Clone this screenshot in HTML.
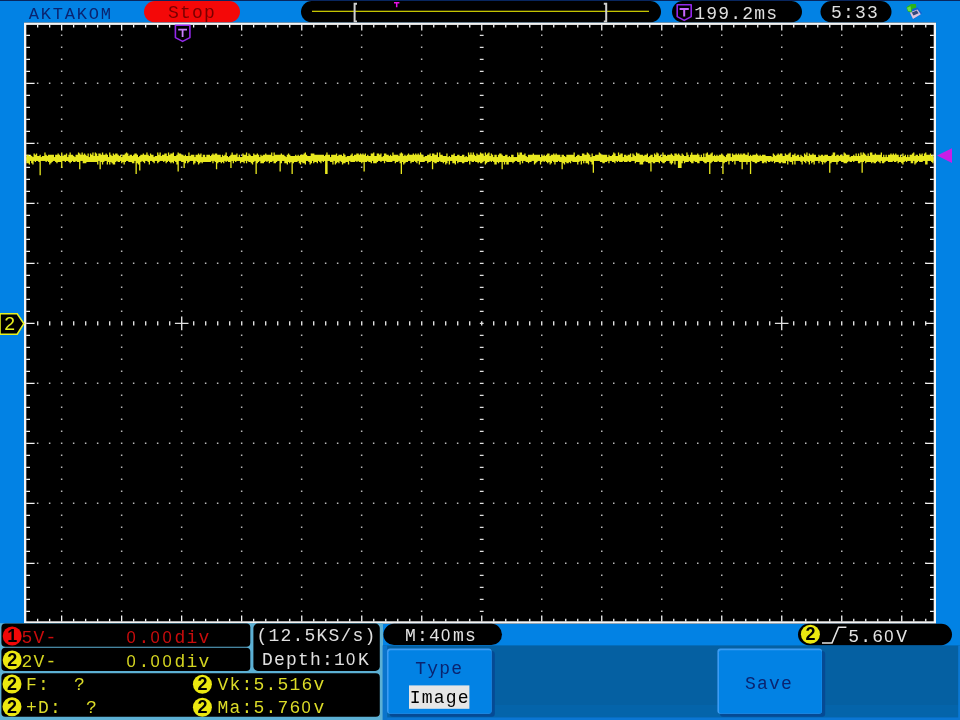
<!DOCTYPE html>
<html lang="en"><head><meta charset="utf-8"><title>AKTAKOM oscilloscope</title>
<style>
html,body{margin:0;padding:0;background:#0282e4;}
body{width:960px;height:720px;overflow:hidden;position:relative;}
svg{position:absolute;left:0;top:0;display:block;filter:blur(0.45px);}
text{font-family:"Liberation Mono","DejaVu Sans Mono",monospace;font-size:18px;letter-spacing:1.2px;white-space:pre;}
.z{font-family:"Liberation Sans","DejaVu Sans",sans-serif;font-size:16.6px;letter-spacing:2.77px;}
.ar{font-family:"Liberation Sans","DejaVu Sans",sans-serif;letter-spacing:0;}
</style></head><body>
<svg width="960" height="720" viewBox="0 0 960 720">
<rect x="0" y="0" width="960" height="720" fill="#0282e4"/>
<rect x="0" y="0" width="960" height="1" fill="#08265e"/>
<rect x="144" y="1" width="96" height="21.5" rx="10.75" fill="#f40808"/>
<text x="168" y="18.2" fill="#7a0000">Stop</text>
<text x="28.8" y="18.8" style="font-size:17px;letter-spacing:1.8px" fill="#0a2470">AKTAKOM</text>
<rect x="301" y="1" width="360" height="21.5" rx="10.75" fill="#000"/>
<rect x="312" y="10.7" width="337" height="1.3" fill="#c4c400"/>
<path d="M357 3.8H354.6V21.4H357" fill="none" stroke="#d0d0d0" stroke-width="2"/>
<path d="M603.8 3.8H606.2V21.4H603.8" fill="none" stroke="#d0d0d0" stroke-width="2"/>
<path d="M394 2.8H399.4M396.7 2.8V7.2" fill="none" stroke="#e810e8" stroke-width="1.5"/>
<rect x="672" y="1" width="130" height="21.5" rx="10.75" fill="#000"/>
<path d="M677.2 4.8H691.2V16.6L684.2 20.4L677.2 16.6Z" fill="#000" stroke="#9428ec" stroke-width="1.6" stroke-linejoin="round"/>
<path d="M679.6 8.9H688.8M684.2 8.9V16.6" fill="none" stroke="#c868ff" stroke-width="2"/>
<text x="694.3" y="18.9" fill="#e0e0e0">199.2ms</text>
<rect x="820.5" y="1" width="71" height="21.5" rx="10.75" fill="#000"/>
<text x="831" y="17.9" fill="#e0e0e0">5:33</text>
<path d="M912.6 8.4L917.6 7.4L922 13.2L913.4 19.6L910 13.4Z" fill="#1460d0"/>
<path d="M909.8 12.6L917.4 9.4L920.8 14.2L913 18.9Z" fill="#dcc4dc"/>
<path d="M911.8 12.6L916.8 10.6L918.6 13.2L913.5 15.6Z" fill="#34487c"/>
<path d="M906.4 7.2L911 4L915.8 4L916.4 7.4L912.2 9L911.4 12.4L907.8 11.6Z" fill="#2cb418"/>
<path d="M907 7.8L910.6 6.2L911.2 11.6L908.2 11Z" fill="#68dc48"/>
<rect x="24" y="22.6" width="912" height="601" fill="#000"/>
<path fill="#b8b8b8" d="M60.9 34.6h1.5v1.5h-1.5zM60.9 46.6h1.5v1.5h-1.5zM60.9 58.6h1.5v1.5h-1.5zM60.9 70.6h1.5v1.5h-1.5zM60.9 82.6h1.5v1.5h-1.5zM60.9 94.6h1.5v1.5h-1.5zM60.9 106.6h1.5v1.5h-1.5zM60.9 118.6h1.5v1.5h-1.5zM60.9 130.6h1.5v1.5h-1.5zM60.9 142.6h1.5v1.5h-1.5zM60.9 154.6h1.5v1.5h-1.5zM60.9 166.6h1.5v1.5h-1.5zM60.9 178.6h1.5v1.5h-1.5zM60.9 190.6h1.5v1.5h-1.5zM60.9 202.6h1.5v1.5h-1.5zM60.9 214.6h1.5v1.5h-1.5zM60.9 226.6h1.5v1.5h-1.5zM60.9 238.6h1.5v1.5h-1.5zM60.9 250.6h1.5v1.5h-1.5zM60.9 262.6h1.5v1.5h-1.5zM60.9 274.6h1.5v1.5h-1.5zM60.9 286.6h1.5v1.5h-1.5zM60.9 298.6h1.5v1.5h-1.5zM60.9 310.6h1.5v1.5h-1.5zM60.9 334.6h1.5v1.5h-1.5zM60.9 346.6h1.5v1.5h-1.5zM60.9 358.6h1.5v1.5h-1.5zM60.9 370.6h1.5v1.5h-1.5zM60.9 382.6h1.5v1.5h-1.5zM60.9 394.6h1.5v1.5h-1.5zM60.9 406.6h1.5v1.5h-1.5zM60.9 418.6h1.5v1.5h-1.5zM60.9 430.6h1.5v1.5h-1.5zM60.9 442.6h1.5v1.5h-1.5zM60.9 454.6h1.5v1.5h-1.5zM60.9 466.6h1.5v1.5h-1.5zM60.9 478.6h1.5v1.5h-1.5zM60.9 490.6h1.5v1.5h-1.5zM60.9 502.6h1.5v1.5h-1.5zM60.9 514.6h1.5v1.5h-1.5zM60.9 526.6h1.5v1.5h-1.5zM60.9 538.6h1.5v1.5h-1.5zM60.9 550.6h1.5v1.5h-1.5zM60.9 562.6h1.5v1.5h-1.5zM60.9 574.6h1.5v1.5h-1.5zM60.9 586.6h1.5v1.5h-1.5zM60.9 598.6h1.5v1.5h-1.5zM60.9 610.6h1.5v1.5h-1.5zM120.9 34.6h1.5v1.5h-1.5zM120.9 46.6h1.5v1.5h-1.5zM120.9 58.6h1.5v1.5h-1.5zM120.9 70.6h1.5v1.5h-1.5zM120.9 82.6h1.5v1.5h-1.5zM120.9 94.6h1.5v1.5h-1.5zM120.9 106.6h1.5v1.5h-1.5zM120.9 118.6h1.5v1.5h-1.5zM120.9 130.6h1.5v1.5h-1.5zM120.9 142.6h1.5v1.5h-1.5zM120.9 154.6h1.5v1.5h-1.5zM120.9 166.6h1.5v1.5h-1.5zM120.9 178.6h1.5v1.5h-1.5zM120.9 190.6h1.5v1.5h-1.5zM120.9 202.6h1.5v1.5h-1.5zM120.9 214.6h1.5v1.5h-1.5zM120.9 226.6h1.5v1.5h-1.5zM120.9 238.6h1.5v1.5h-1.5zM120.9 250.6h1.5v1.5h-1.5zM120.9 262.6h1.5v1.5h-1.5zM120.9 274.6h1.5v1.5h-1.5zM120.9 286.6h1.5v1.5h-1.5zM120.9 298.6h1.5v1.5h-1.5zM120.9 310.6h1.5v1.5h-1.5zM120.9 334.6h1.5v1.5h-1.5zM120.9 346.6h1.5v1.5h-1.5zM120.9 358.6h1.5v1.5h-1.5zM120.9 370.6h1.5v1.5h-1.5zM120.9 382.6h1.5v1.5h-1.5zM120.9 394.6h1.5v1.5h-1.5zM120.9 406.6h1.5v1.5h-1.5zM120.9 418.6h1.5v1.5h-1.5zM120.9 430.6h1.5v1.5h-1.5zM120.9 442.6h1.5v1.5h-1.5zM120.9 454.6h1.5v1.5h-1.5zM120.9 466.6h1.5v1.5h-1.5zM120.9 478.6h1.5v1.5h-1.5zM120.9 490.6h1.5v1.5h-1.5zM120.9 502.6h1.5v1.5h-1.5zM120.9 514.6h1.5v1.5h-1.5zM120.9 526.6h1.5v1.5h-1.5zM120.9 538.6h1.5v1.5h-1.5zM120.9 550.6h1.5v1.5h-1.5zM120.9 562.6h1.5v1.5h-1.5zM120.9 574.6h1.5v1.5h-1.5zM120.9 586.6h1.5v1.5h-1.5zM120.9 598.6h1.5v1.5h-1.5zM120.9 610.6h1.5v1.5h-1.5zM180.9 34.6h1.5v1.5h-1.5zM180.9 46.6h1.5v1.5h-1.5zM180.9 58.6h1.5v1.5h-1.5zM180.9 70.6h1.5v1.5h-1.5zM180.9 82.6h1.5v1.5h-1.5zM180.9 94.6h1.5v1.5h-1.5zM180.9 106.6h1.5v1.5h-1.5zM180.9 118.6h1.5v1.5h-1.5zM180.9 130.6h1.5v1.5h-1.5zM180.9 142.6h1.5v1.5h-1.5zM180.9 154.6h1.5v1.5h-1.5zM180.9 166.6h1.5v1.5h-1.5zM180.9 178.6h1.5v1.5h-1.5zM180.9 190.6h1.5v1.5h-1.5zM180.9 202.6h1.5v1.5h-1.5zM180.9 214.6h1.5v1.5h-1.5zM180.9 226.6h1.5v1.5h-1.5zM180.9 238.6h1.5v1.5h-1.5zM180.9 250.6h1.5v1.5h-1.5zM180.9 262.6h1.5v1.5h-1.5zM180.9 274.6h1.5v1.5h-1.5zM180.9 286.6h1.5v1.5h-1.5zM180.9 298.6h1.5v1.5h-1.5zM180.9 310.6h1.5v1.5h-1.5zM180.9 334.6h1.5v1.5h-1.5zM180.9 346.6h1.5v1.5h-1.5zM180.9 358.6h1.5v1.5h-1.5zM180.9 370.6h1.5v1.5h-1.5zM180.9 382.6h1.5v1.5h-1.5zM180.9 394.6h1.5v1.5h-1.5zM180.9 406.6h1.5v1.5h-1.5zM180.9 418.6h1.5v1.5h-1.5zM180.9 430.6h1.5v1.5h-1.5zM180.9 442.6h1.5v1.5h-1.5zM180.9 454.6h1.5v1.5h-1.5zM180.9 466.6h1.5v1.5h-1.5zM180.9 478.6h1.5v1.5h-1.5zM180.9 490.6h1.5v1.5h-1.5zM180.9 502.6h1.5v1.5h-1.5zM180.9 514.6h1.5v1.5h-1.5zM180.9 526.6h1.5v1.5h-1.5zM180.9 538.6h1.5v1.5h-1.5zM180.9 550.6h1.5v1.5h-1.5zM180.9 562.6h1.5v1.5h-1.5zM180.9 574.6h1.5v1.5h-1.5zM180.9 586.6h1.5v1.5h-1.5zM180.9 598.6h1.5v1.5h-1.5zM180.9 610.6h1.5v1.5h-1.5zM240.9 34.6h1.5v1.5h-1.5zM240.9 46.6h1.5v1.5h-1.5zM240.9 58.6h1.5v1.5h-1.5zM240.9 70.6h1.5v1.5h-1.5zM240.9 82.6h1.5v1.5h-1.5zM240.9 94.6h1.5v1.5h-1.5zM240.9 106.6h1.5v1.5h-1.5zM240.9 118.6h1.5v1.5h-1.5zM240.9 130.6h1.5v1.5h-1.5zM240.9 142.6h1.5v1.5h-1.5zM240.9 154.6h1.5v1.5h-1.5zM240.9 166.6h1.5v1.5h-1.5zM240.9 178.6h1.5v1.5h-1.5zM240.9 190.6h1.5v1.5h-1.5zM240.9 202.6h1.5v1.5h-1.5zM240.9 214.6h1.5v1.5h-1.5zM240.9 226.6h1.5v1.5h-1.5zM240.9 238.6h1.5v1.5h-1.5zM240.9 250.6h1.5v1.5h-1.5zM240.9 262.6h1.5v1.5h-1.5zM240.9 274.6h1.5v1.5h-1.5zM240.9 286.6h1.5v1.5h-1.5zM240.9 298.6h1.5v1.5h-1.5zM240.9 310.6h1.5v1.5h-1.5zM240.9 334.6h1.5v1.5h-1.5zM240.9 346.6h1.5v1.5h-1.5zM240.9 358.6h1.5v1.5h-1.5zM240.9 370.6h1.5v1.5h-1.5zM240.9 382.6h1.5v1.5h-1.5zM240.9 394.6h1.5v1.5h-1.5zM240.9 406.6h1.5v1.5h-1.5zM240.9 418.6h1.5v1.5h-1.5zM240.9 430.6h1.5v1.5h-1.5zM240.9 442.6h1.5v1.5h-1.5zM240.9 454.6h1.5v1.5h-1.5zM240.9 466.6h1.5v1.5h-1.5zM240.9 478.6h1.5v1.5h-1.5zM240.9 490.6h1.5v1.5h-1.5zM240.9 502.6h1.5v1.5h-1.5zM240.9 514.6h1.5v1.5h-1.5zM240.9 526.6h1.5v1.5h-1.5zM240.9 538.6h1.5v1.5h-1.5zM240.9 550.6h1.5v1.5h-1.5zM240.9 562.6h1.5v1.5h-1.5zM240.9 574.6h1.5v1.5h-1.5zM240.9 586.6h1.5v1.5h-1.5zM240.9 598.6h1.5v1.5h-1.5zM240.9 610.6h1.5v1.5h-1.5zM300.9 34.6h1.5v1.5h-1.5zM300.9 46.6h1.5v1.5h-1.5zM300.9 58.6h1.5v1.5h-1.5zM300.9 70.6h1.5v1.5h-1.5zM300.9 82.6h1.5v1.5h-1.5zM300.9 94.6h1.5v1.5h-1.5zM300.9 106.6h1.5v1.5h-1.5zM300.9 118.6h1.5v1.5h-1.5zM300.9 130.6h1.5v1.5h-1.5zM300.9 142.6h1.5v1.5h-1.5zM300.9 154.6h1.5v1.5h-1.5zM300.9 166.6h1.5v1.5h-1.5zM300.9 178.6h1.5v1.5h-1.5zM300.9 190.6h1.5v1.5h-1.5zM300.9 202.6h1.5v1.5h-1.5zM300.9 214.6h1.5v1.5h-1.5zM300.9 226.6h1.5v1.5h-1.5zM300.9 238.6h1.5v1.5h-1.5zM300.9 250.6h1.5v1.5h-1.5zM300.9 262.6h1.5v1.5h-1.5zM300.9 274.6h1.5v1.5h-1.5zM300.9 286.6h1.5v1.5h-1.5zM300.9 298.6h1.5v1.5h-1.5zM300.9 310.6h1.5v1.5h-1.5zM300.9 334.6h1.5v1.5h-1.5zM300.9 346.6h1.5v1.5h-1.5zM300.9 358.6h1.5v1.5h-1.5zM300.9 370.6h1.5v1.5h-1.5zM300.9 382.6h1.5v1.5h-1.5zM300.9 394.6h1.5v1.5h-1.5zM300.9 406.6h1.5v1.5h-1.5zM300.9 418.6h1.5v1.5h-1.5zM300.9 430.6h1.5v1.5h-1.5zM300.9 442.6h1.5v1.5h-1.5zM300.9 454.6h1.5v1.5h-1.5zM300.9 466.6h1.5v1.5h-1.5zM300.9 478.6h1.5v1.5h-1.5zM300.9 490.6h1.5v1.5h-1.5zM300.9 502.6h1.5v1.5h-1.5zM300.9 514.6h1.5v1.5h-1.5zM300.9 526.6h1.5v1.5h-1.5zM300.9 538.6h1.5v1.5h-1.5zM300.9 550.6h1.5v1.5h-1.5zM300.9 562.6h1.5v1.5h-1.5zM300.9 574.6h1.5v1.5h-1.5zM300.9 586.6h1.5v1.5h-1.5zM300.9 598.6h1.5v1.5h-1.5zM300.9 610.6h1.5v1.5h-1.5zM360.9 34.6h1.5v1.5h-1.5zM360.9 46.6h1.5v1.5h-1.5zM360.9 58.6h1.5v1.5h-1.5zM360.9 70.6h1.5v1.5h-1.5zM360.9 82.6h1.5v1.5h-1.5zM360.9 94.6h1.5v1.5h-1.5zM360.9 106.6h1.5v1.5h-1.5zM360.9 118.6h1.5v1.5h-1.5zM360.9 130.6h1.5v1.5h-1.5zM360.9 142.6h1.5v1.5h-1.5zM360.9 154.6h1.5v1.5h-1.5zM360.9 166.6h1.5v1.5h-1.5zM360.9 178.6h1.5v1.5h-1.5zM360.9 190.6h1.5v1.5h-1.5zM360.9 202.6h1.5v1.5h-1.5zM360.9 214.6h1.5v1.5h-1.5zM360.9 226.6h1.5v1.5h-1.5zM360.9 238.6h1.5v1.5h-1.5zM360.9 250.6h1.5v1.5h-1.5zM360.9 262.6h1.5v1.5h-1.5zM360.9 274.6h1.5v1.5h-1.5zM360.9 286.6h1.5v1.5h-1.5zM360.9 298.6h1.5v1.5h-1.5zM360.9 310.6h1.5v1.5h-1.5zM360.9 334.6h1.5v1.5h-1.5zM360.9 346.6h1.5v1.5h-1.5zM360.9 358.6h1.5v1.5h-1.5zM360.9 370.6h1.5v1.5h-1.5zM360.9 382.6h1.5v1.5h-1.5zM360.9 394.6h1.5v1.5h-1.5zM360.9 406.6h1.5v1.5h-1.5zM360.9 418.6h1.5v1.5h-1.5zM360.9 430.6h1.5v1.5h-1.5zM360.9 442.6h1.5v1.5h-1.5zM360.9 454.6h1.5v1.5h-1.5zM360.9 466.6h1.5v1.5h-1.5zM360.9 478.6h1.5v1.5h-1.5zM360.9 490.6h1.5v1.5h-1.5zM360.9 502.6h1.5v1.5h-1.5zM360.9 514.6h1.5v1.5h-1.5zM360.9 526.6h1.5v1.5h-1.5zM360.9 538.6h1.5v1.5h-1.5zM360.9 550.6h1.5v1.5h-1.5zM360.9 562.6h1.5v1.5h-1.5zM360.9 574.6h1.5v1.5h-1.5zM360.9 586.6h1.5v1.5h-1.5zM360.9 598.6h1.5v1.5h-1.5zM360.9 610.6h1.5v1.5h-1.5zM420.9 34.6h1.5v1.5h-1.5zM420.9 46.6h1.5v1.5h-1.5zM420.9 58.6h1.5v1.5h-1.5zM420.9 70.6h1.5v1.5h-1.5zM420.9 82.6h1.5v1.5h-1.5zM420.9 94.6h1.5v1.5h-1.5zM420.9 106.6h1.5v1.5h-1.5zM420.9 118.6h1.5v1.5h-1.5zM420.9 130.6h1.5v1.5h-1.5zM420.9 142.6h1.5v1.5h-1.5zM420.9 154.6h1.5v1.5h-1.5zM420.9 166.6h1.5v1.5h-1.5zM420.9 178.6h1.5v1.5h-1.5zM420.9 190.6h1.5v1.5h-1.5zM420.9 202.6h1.5v1.5h-1.5zM420.9 214.6h1.5v1.5h-1.5zM420.9 226.6h1.5v1.5h-1.5zM420.9 238.6h1.5v1.5h-1.5zM420.9 250.6h1.5v1.5h-1.5zM420.9 262.6h1.5v1.5h-1.5zM420.9 274.6h1.5v1.5h-1.5zM420.9 286.6h1.5v1.5h-1.5zM420.9 298.6h1.5v1.5h-1.5zM420.9 310.6h1.5v1.5h-1.5zM420.9 334.6h1.5v1.5h-1.5zM420.9 346.6h1.5v1.5h-1.5zM420.9 358.6h1.5v1.5h-1.5zM420.9 370.6h1.5v1.5h-1.5zM420.9 382.6h1.5v1.5h-1.5zM420.9 394.6h1.5v1.5h-1.5zM420.9 406.6h1.5v1.5h-1.5zM420.9 418.6h1.5v1.5h-1.5zM420.9 430.6h1.5v1.5h-1.5zM420.9 442.6h1.5v1.5h-1.5zM420.9 454.6h1.5v1.5h-1.5zM420.9 466.6h1.5v1.5h-1.5zM420.9 478.6h1.5v1.5h-1.5zM420.9 490.6h1.5v1.5h-1.5zM420.9 502.6h1.5v1.5h-1.5zM420.9 514.6h1.5v1.5h-1.5zM420.9 526.6h1.5v1.5h-1.5zM420.9 538.6h1.5v1.5h-1.5zM420.9 550.6h1.5v1.5h-1.5zM420.9 562.6h1.5v1.5h-1.5zM420.9 574.6h1.5v1.5h-1.5zM420.9 586.6h1.5v1.5h-1.5zM420.9 598.6h1.5v1.5h-1.5zM420.9 610.6h1.5v1.5h-1.5zM541.0 34.6h1.5v1.5h-1.5zM541.0 46.6h1.5v1.5h-1.5zM541.0 58.6h1.5v1.5h-1.5zM541.0 70.6h1.5v1.5h-1.5zM541.0 82.6h1.5v1.5h-1.5zM541.0 94.6h1.5v1.5h-1.5zM541.0 106.6h1.5v1.5h-1.5zM541.0 118.6h1.5v1.5h-1.5zM541.0 130.6h1.5v1.5h-1.5zM541.0 142.6h1.5v1.5h-1.5zM541.0 154.6h1.5v1.5h-1.5zM541.0 166.6h1.5v1.5h-1.5zM541.0 178.6h1.5v1.5h-1.5zM541.0 190.6h1.5v1.5h-1.5zM541.0 202.6h1.5v1.5h-1.5zM541.0 214.6h1.5v1.5h-1.5zM541.0 226.6h1.5v1.5h-1.5zM541.0 238.6h1.5v1.5h-1.5zM541.0 250.6h1.5v1.5h-1.5zM541.0 262.6h1.5v1.5h-1.5zM541.0 274.6h1.5v1.5h-1.5zM541.0 286.6h1.5v1.5h-1.5zM541.0 298.6h1.5v1.5h-1.5zM541.0 310.6h1.5v1.5h-1.5zM541.0 334.6h1.5v1.5h-1.5zM541.0 346.6h1.5v1.5h-1.5zM541.0 358.6h1.5v1.5h-1.5zM541.0 370.6h1.5v1.5h-1.5zM541.0 382.6h1.5v1.5h-1.5zM541.0 394.6h1.5v1.5h-1.5zM541.0 406.6h1.5v1.5h-1.5zM541.0 418.6h1.5v1.5h-1.5zM541.0 430.6h1.5v1.5h-1.5zM541.0 442.6h1.5v1.5h-1.5zM541.0 454.6h1.5v1.5h-1.5zM541.0 466.6h1.5v1.5h-1.5zM541.0 478.6h1.5v1.5h-1.5zM541.0 490.6h1.5v1.5h-1.5zM541.0 502.6h1.5v1.5h-1.5zM541.0 514.6h1.5v1.5h-1.5zM541.0 526.6h1.5v1.5h-1.5zM541.0 538.6h1.5v1.5h-1.5zM541.0 550.6h1.5v1.5h-1.5zM541.0 562.6h1.5v1.5h-1.5zM541.0 574.6h1.5v1.5h-1.5zM541.0 586.6h1.5v1.5h-1.5zM541.0 598.6h1.5v1.5h-1.5zM541.0 610.6h1.5v1.5h-1.5zM601.0 34.6h1.5v1.5h-1.5zM601.0 46.6h1.5v1.5h-1.5zM601.0 58.6h1.5v1.5h-1.5zM601.0 70.6h1.5v1.5h-1.5zM601.0 82.6h1.5v1.5h-1.5zM601.0 94.6h1.5v1.5h-1.5zM601.0 106.6h1.5v1.5h-1.5zM601.0 118.6h1.5v1.5h-1.5zM601.0 130.6h1.5v1.5h-1.5zM601.0 142.6h1.5v1.5h-1.5zM601.0 154.6h1.5v1.5h-1.5zM601.0 166.6h1.5v1.5h-1.5zM601.0 178.6h1.5v1.5h-1.5zM601.0 190.6h1.5v1.5h-1.5zM601.0 202.6h1.5v1.5h-1.5zM601.0 214.6h1.5v1.5h-1.5zM601.0 226.6h1.5v1.5h-1.5zM601.0 238.6h1.5v1.5h-1.5zM601.0 250.6h1.5v1.5h-1.5zM601.0 262.6h1.5v1.5h-1.5zM601.0 274.6h1.5v1.5h-1.5zM601.0 286.6h1.5v1.5h-1.5zM601.0 298.6h1.5v1.5h-1.5zM601.0 310.6h1.5v1.5h-1.5zM601.0 334.6h1.5v1.5h-1.5zM601.0 346.6h1.5v1.5h-1.5zM601.0 358.6h1.5v1.5h-1.5zM601.0 370.6h1.5v1.5h-1.5zM601.0 382.6h1.5v1.5h-1.5zM601.0 394.6h1.5v1.5h-1.5zM601.0 406.6h1.5v1.5h-1.5zM601.0 418.6h1.5v1.5h-1.5zM601.0 430.6h1.5v1.5h-1.5zM601.0 442.6h1.5v1.5h-1.5zM601.0 454.6h1.5v1.5h-1.5zM601.0 466.6h1.5v1.5h-1.5zM601.0 478.6h1.5v1.5h-1.5zM601.0 490.6h1.5v1.5h-1.5zM601.0 502.6h1.5v1.5h-1.5zM601.0 514.6h1.5v1.5h-1.5zM601.0 526.6h1.5v1.5h-1.5zM601.0 538.6h1.5v1.5h-1.5zM601.0 550.6h1.5v1.5h-1.5zM601.0 562.6h1.5v1.5h-1.5zM601.0 574.6h1.5v1.5h-1.5zM601.0 586.6h1.5v1.5h-1.5zM601.0 598.6h1.5v1.5h-1.5zM601.0 610.6h1.5v1.5h-1.5zM661.0 34.6h1.5v1.5h-1.5zM661.0 46.6h1.5v1.5h-1.5zM661.0 58.6h1.5v1.5h-1.5zM661.0 70.6h1.5v1.5h-1.5zM661.0 82.6h1.5v1.5h-1.5zM661.0 94.6h1.5v1.5h-1.5zM661.0 106.6h1.5v1.5h-1.5zM661.0 118.6h1.5v1.5h-1.5zM661.0 130.6h1.5v1.5h-1.5zM661.0 142.6h1.5v1.5h-1.5zM661.0 154.6h1.5v1.5h-1.5zM661.0 166.6h1.5v1.5h-1.5zM661.0 178.6h1.5v1.5h-1.5zM661.0 190.6h1.5v1.5h-1.5zM661.0 202.6h1.5v1.5h-1.5zM661.0 214.6h1.5v1.5h-1.5zM661.0 226.6h1.5v1.5h-1.5zM661.0 238.6h1.5v1.5h-1.5zM661.0 250.6h1.5v1.5h-1.5zM661.0 262.6h1.5v1.5h-1.5zM661.0 274.6h1.5v1.5h-1.5zM661.0 286.6h1.5v1.5h-1.5zM661.0 298.6h1.5v1.5h-1.5zM661.0 310.6h1.5v1.5h-1.5zM661.0 334.6h1.5v1.5h-1.5zM661.0 346.6h1.5v1.5h-1.5zM661.0 358.6h1.5v1.5h-1.5zM661.0 370.6h1.5v1.5h-1.5zM661.0 382.6h1.5v1.5h-1.5zM661.0 394.6h1.5v1.5h-1.5zM661.0 406.6h1.5v1.5h-1.5zM661.0 418.6h1.5v1.5h-1.5zM661.0 430.6h1.5v1.5h-1.5zM661.0 442.6h1.5v1.5h-1.5zM661.0 454.6h1.5v1.5h-1.5zM661.0 466.6h1.5v1.5h-1.5zM661.0 478.6h1.5v1.5h-1.5zM661.0 490.6h1.5v1.5h-1.5zM661.0 502.6h1.5v1.5h-1.5zM661.0 514.6h1.5v1.5h-1.5zM661.0 526.6h1.5v1.5h-1.5zM661.0 538.6h1.5v1.5h-1.5zM661.0 550.6h1.5v1.5h-1.5zM661.0 562.6h1.5v1.5h-1.5zM661.0 574.6h1.5v1.5h-1.5zM661.0 586.6h1.5v1.5h-1.5zM661.0 598.6h1.5v1.5h-1.5zM661.0 610.6h1.5v1.5h-1.5zM721.0 34.6h1.5v1.5h-1.5zM721.0 46.6h1.5v1.5h-1.5zM721.0 58.6h1.5v1.5h-1.5zM721.0 70.6h1.5v1.5h-1.5zM721.0 82.6h1.5v1.5h-1.5zM721.0 94.6h1.5v1.5h-1.5zM721.0 106.6h1.5v1.5h-1.5zM721.0 118.6h1.5v1.5h-1.5zM721.0 130.6h1.5v1.5h-1.5zM721.0 142.6h1.5v1.5h-1.5zM721.0 154.6h1.5v1.5h-1.5zM721.0 166.6h1.5v1.5h-1.5zM721.0 178.6h1.5v1.5h-1.5zM721.0 190.6h1.5v1.5h-1.5zM721.0 202.6h1.5v1.5h-1.5zM721.0 214.6h1.5v1.5h-1.5zM721.0 226.6h1.5v1.5h-1.5zM721.0 238.6h1.5v1.5h-1.5zM721.0 250.6h1.5v1.5h-1.5zM721.0 262.6h1.5v1.5h-1.5zM721.0 274.6h1.5v1.5h-1.5zM721.0 286.6h1.5v1.5h-1.5zM721.0 298.6h1.5v1.5h-1.5zM721.0 310.6h1.5v1.5h-1.5zM721.0 334.6h1.5v1.5h-1.5zM721.0 346.6h1.5v1.5h-1.5zM721.0 358.6h1.5v1.5h-1.5zM721.0 370.6h1.5v1.5h-1.5zM721.0 382.6h1.5v1.5h-1.5zM721.0 394.6h1.5v1.5h-1.5zM721.0 406.6h1.5v1.5h-1.5zM721.0 418.6h1.5v1.5h-1.5zM721.0 430.6h1.5v1.5h-1.5zM721.0 442.6h1.5v1.5h-1.5zM721.0 454.6h1.5v1.5h-1.5zM721.0 466.6h1.5v1.5h-1.5zM721.0 478.6h1.5v1.5h-1.5zM721.0 490.6h1.5v1.5h-1.5zM721.0 502.6h1.5v1.5h-1.5zM721.0 514.6h1.5v1.5h-1.5zM721.0 526.6h1.5v1.5h-1.5zM721.0 538.6h1.5v1.5h-1.5zM721.0 550.6h1.5v1.5h-1.5zM721.0 562.6h1.5v1.5h-1.5zM721.0 574.6h1.5v1.5h-1.5zM721.0 586.6h1.5v1.5h-1.5zM721.0 598.6h1.5v1.5h-1.5zM721.0 610.6h1.5v1.5h-1.5zM781.0 34.6h1.5v1.5h-1.5zM781.0 46.6h1.5v1.5h-1.5zM781.0 58.6h1.5v1.5h-1.5zM781.0 70.6h1.5v1.5h-1.5zM781.0 82.6h1.5v1.5h-1.5zM781.0 94.6h1.5v1.5h-1.5zM781.0 106.6h1.5v1.5h-1.5zM781.0 118.6h1.5v1.5h-1.5zM781.0 130.6h1.5v1.5h-1.5zM781.0 142.6h1.5v1.5h-1.5zM781.0 154.6h1.5v1.5h-1.5zM781.0 166.6h1.5v1.5h-1.5zM781.0 178.6h1.5v1.5h-1.5zM781.0 190.6h1.5v1.5h-1.5zM781.0 202.6h1.5v1.5h-1.5zM781.0 214.6h1.5v1.5h-1.5zM781.0 226.6h1.5v1.5h-1.5zM781.0 238.6h1.5v1.5h-1.5zM781.0 250.6h1.5v1.5h-1.5zM781.0 262.6h1.5v1.5h-1.5zM781.0 274.6h1.5v1.5h-1.5zM781.0 286.6h1.5v1.5h-1.5zM781.0 298.6h1.5v1.5h-1.5zM781.0 310.6h1.5v1.5h-1.5zM781.0 334.6h1.5v1.5h-1.5zM781.0 346.6h1.5v1.5h-1.5zM781.0 358.6h1.5v1.5h-1.5zM781.0 370.6h1.5v1.5h-1.5zM781.0 382.6h1.5v1.5h-1.5zM781.0 394.6h1.5v1.5h-1.5zM781.0 406.6h1.5v1.5h-1.5zM781.0 418.6h1.5v1.5h-1.5zM781.0 430.6h1.5v1.5h-1.5zM781.0 442.6h1.5v1.5h-1.5zM781.0 454.6h1.5v1.5h-1.5zM781.0 466.6h1.5v1.5h-1.5zM781.0 478.6h1.5v1.5h-1.5zM781.0 490.6h1.5v1.5h-1.5zM781.0 502.6h1.5v1.5h-1.5zM781.0 514.6h1.5v1.5h-1.5zM781.0 526.6h1.5v1.5h-1.5zM781.0 538.6h1.5v1.5h-1.5zM781.0 550.6h1.5v1.5h-1.5zM781.0 562.6h1.5v1.5h-1.5zM781.0 574.6h1.5v1.5h-1.5zM781.0 586.6h1.5v1.5h-1.5zM781.0 598.6h1.5v1.5h-1.5zM781.0 610.6h1.5v1.5h-1.5zM841.0 34.6h1.5v1.5h-1.5zM841.0 46.6h1.5v1.5h-1.5zM841.0 58.6h1.5v1.5h-1.5zM841.0 70.6h1.5v1.5h-1.5zM841.0 82.6h1.5v1.5h-1.5zM841.0 94.6h1.5v1.5h-1.5zM841.0 106.6h1.5v1.5h-1.5zM841.0 118.6h1.5v1.5h-1.5zM841.0 130.6h1.5v1.5h-1.5zM841.0 142.6h1.5v1.5h-1.5zM841.0 154.6h1.5v1.5h-1.5zM841.0 166.6h1.5v1.5h-1.5zM841.0 178.6h1.5v1.5h-1.5zM841.0 190.6h1.5v1.5h-1.5zM841.0 202.6h1.5v1.5h-1.5zM841.0 214.6h1.5v1.5h-1.5zM841.0 226.6h1.5v1.5h-1.5zM841.0 238.6h1.5v1.5h-1.5zM841.0 250.6h1.5v1.5h-1.5zM841.0 262.6h1.5v1.5h-1.5zM841.0 274.6h1.5v1.5h-1.5zM841.0 286.6h1.5v1.5h-1.5zM841.0 298.6h1.5v1.5h-1.5zM841.0 310.6h1.5v1.5h-1.5zM841.0 334.6h1.5v1.5h-1.5zM841.0 346.6h1.5v1.5h-1.5zM841.0 358.6h1.5v1.5h-1.5zM841.0 370.6h1.5v1.5h-1.5zM841.0 382.6h1.5v1.5h-1.5zM841.0 394.6h1.5v1.5h-1.5zM841.0 406.6h1.5v1.5h-1.5zM841.0 418.6h1.5v1.5h-1.5zM841.0 430.6h1.5v1.5h-1.5zM841.0 442.6h1.5v1.5h-1.5zM841.0 454.6h1.5v1.5h-1.5zM841.0 466.6h1.5v1.5h-1.5zM841.0 478.6h1.5v1.5h-1.5zM841.0 490.6h1.5v1.5h-1.5zM841.0 502.6h1.5v1.5h-1.5zM841.0 514.6h1.5v1.5h-1.5zM841.0 526.6h1.5v1.5h-1.5zM841.0 538.6h1.5v1.5h-1.5zM841.0 550.6h1.5v1.5h-1.5zM841.0 562.6h1.5v1.5h-1.5zM841.0 574.6h1.5v1.5h-1.5zM841.0 586.6h1.5v1.5h-1.5zM841.0 598.6h1.5v1.5h-1.5zM841.0 610.6h1.5v1.5h-1.5zM901.0 34.6h1.5v1.5h-1.5zM901.0 46.6h1.5v1.5h-1.5zM901.0 58.6h1.5v1.5h-1.5zM901.0 70.6h1.5v1.5h-1.5zM901.0 82.6h1.5v1.5h-1.5zM901.0 94.6h1.5v1.5h-1.5zM901.0 106.6h1.5v1.5h-1.5zM901.0 118.6h1.5v1.5h-1.5zM901.0 130.6h1.5v1.5h-1.5zM901.0 142.6h1.5v1.5h-1.5zM901.0 154.6h1.5v1.5h-1.5zM901.0 166.6h1.5v1.5h-1.5zM901.0 178.6h1.5v1.5h-1.5zM901.0 190.6h1.5v1.5h-1.5zM901.0 202.6h1.5v1.5h-1.5zM901.0 214.6h1.5v1.5h-1.5zM901.0 226.6h1.5v1.5h-1.5zM901.0 238.6h1.5v1.5h-1.5zM901.0 250.6h1.5v1.5h-1.5zM901.0 262.6h1.5v1.5h-1.5zM901.0 274.6h1.5v1.5h-1.5zM901.0 286.6h1.5v1.5h-1.5zM901.0 298.6h1.5v1.5h-1.5zM901.0 310.6h1.5v1.5h-1.5zM901.0 334.6h1.5v1.5h-1.5zM901.0 346.6h1.5v1.5h-1.5zM901.0 358.6h1.5v1.5h-1.5zM901.0 370.6h1.5v1.5h-1.5zM901.0 382.6h1.5v1.5h-1.5zM901.0 394.6h1.5v1.5h-1.5zM901.0 406.6h1.5v1.5h-1.5zM901.0 418.6h1.5v1.5h-1.5zM901.0 430.6h1.5v1.5h-1.5zM901.0 442.6h1.5v1.5h-1.5zM901.0 454.6h1.5v1.5h-1.5zM901.0 466.6h1.5v1.5h-1.5zM901.0 478.6h1.5v1.5h-1.5zM901.0 490.6h1.5v1.5h-1.5zM901.0 502.6h1.5v1.5h-1.5zM901.0 514.6h1.5v1.5h-1.5zM901.0 526.6h1.5v1.5h-1.5zM901.0 538.6h1.5v1.5h-1.5zM901.0 550.6h1.5v1.5h-1.5zM901.0 562.6h1.5v1.5h-1.5zM901.0 574.6h1.5v1.5h-1.5zM901.0 586.6h1.5v1.5h-1.5zM901.0 598.6h1.5v1.5h-1.5zM901.0 610.6h1.5v1.5h-1.5zM36.9 82.6h1.5v1.5h-1.5zM48.9 82.6h1.5v1.5h-1.5zM72.9 82.6h1.5v1.5h-1.5zM84.9 82.6h1.5v1.5h-1.5zM96.9 82.6h1.5v1.5h-1.5zM108.9 82.6h1.5v1.5h-1.5zM132.9 82.6h1.5v1.5h-1.5zM144.9 82.6h1.5v1.5h-1.5zM156.9 82.6h1.5v1.5h-1.5zM168.9 82.6h1.5v1.5h-1.5zM192.9 82.6h1.5v1.5h-1.5zM204.9 82.6h1.5v1.5h-1.5zM216.9 82.6h1.5v1.5h-1.5zM228.9 82.6h1.5v1.5h-1.5zM252.9 82.6h1.5v1.5h-1.5zM264.9 82.6h1.5v1.5h-1.5zM276.9 82.6h1.5v1.5h-1.5zM288.9 82.6h1.5v1.5h-1.5zM312.9 82.6h1.5v1.5h-1.5zM324.9 82.6h1.5v1.5h-1.5zM336.9 82.6h1.5v1.5h-1.5zM348.9 82.6h1.5v1.5h-1.5zM372.9 82.6h1.5v1.5h-1.5zM384.9 82.6h1.5v1.5h-1.5zM396.9 82.6h1.5v1.5h-1.5zM408.9 82.6h1.5v1.5h-1.5zM432.9 82.6h1.5v1.5h-1.5zM444.9 82.6h1.5v1.5h-1.5zM456.9 82.6h1.5v1.5h-1.5zM468.9 82.6h1.5v1.5h-1.5zM492.9 82.6h1.5v1.5h-1.5zM504.9 82.6h1.5v1.5h-1.5zM517.0 82.6h1.5v1.5h-1.5zM529.0 82.6h1.5v1.5h-1.5zM553.0 82.6h1.5v1.5h-1.5zM565.0 82.6h1.5v1.5h-1.5zM577.0 82.6h1.5v1.5h-1.5zM589.0 82.6h1.5v1.5h-1.5zM613.0 82.6h1.5v1.5h-1.5zM625.0 82.6h1.5v1.5h-1.5zM637.0 82.6h1.5v1.5h-1.5zM649.0 82.6h1.5v1.5h-1.5zM673.0 82.6h1.5v1.5h-1.5zM685.0 82.6h1.5v1.5h-1.5zM697.0 82.6h1.5v1.5h-1.5zM709.0 82.6h1.5v1.5h-1.5zM733.0 82.6h1.5v1.5h-1.5zM745.0 82.6h1.5v1.5h-1.5zM757.0 82.6h1.5v1.5h-1.5zM769.0 82.6h1.5v1.5h-1.5zM793.0 82.6h1.5v1.5h-1.5zM805.0 82.6h1.5v1.5h-1.5zM817.0 82.6h1.5v1.5h-1.5zM829.0 82.6h1.5v1.5h-1.5zM853.0 82.6h1.5v1.5h-1.5zM865.0 82.6h1.5v1.5h-1.5zM877.0 82.6h1.5v1.5h-1.5zM889.0 82.6h1.5v1.5h-1.5zM913.0 82.6h1.5v1.5h-1.5zM925.0 82.6h1.5v1.5h-1.5zM36.9 142.6h1.5v1.5h-1.5zM48.9 142.6h1.5v1.5h-1.5zM72.9 142.6h1.5v1.5h-1.5zM84.9 142.6h1.5v1.5h-1.5zM96.9 142.6h1.5v1.5h-1.5zM108.9 142.6h1.5v1.5h-1.5zM132.9 142.6h1.5v1.5h-1.5zM144.9 142.6h1.5v1.5h-1.5zM156.9 142.6h1.5v1.5h-1.5zM168.9 142.6h1.5v1.5h-1.5zM192.9 142.6h1.5v1.5h-1.5zM204.9 142.6h1.5v1.5h-1.5zM216.9 142.6h1.5v1.5h-1.5zM228.9 142.6h1.5v1.5h-1.5zM252.9 142.6h1.5v1.5h-1.5zM264.9 142.6h1.5v1.5h-1.5zM276.9 142.6h1.5v1.5h-1.5zM288.9 142.6h1.5v1.5h-1.5zM312.9 142.6h1.5v1.5h-1.5zM324.9 142.6h1.5v1.5h-1.5zM336.9 142.6h1.5v1.5h-1.5zM348.9 142.6h1.5v1.5h-1.5zM372.9 142.6h1.5v1.5h-1.5zM384.9 142.6h1.5v1.5h-1.5zM396.9 142.6h1.5v1.5h-1.5zM408.9 142.6h1.5v1.5h-1.5zM432.9 142.6h1.5v1.5h-1.5zM444.9 142.6h1.5v1.5h-1.5zM456.9 142.6h1.5v1.5h-1.5zM468.9 142.6h1.5v1.5h-1.5zM492.9 142.6h1.5v1.5h-1.5zM504.9 142.6h1.5v1.5h-1.5zM517.0 142.6h1.5v1.5h-1.5zM529.0 142.6h1.5v1.5h-1.5zM553.0 142.6h1.5v1.5h-1.5zM565.0 142.6h1.5v1.5h-1.5zM577.0 142.6h1.5v1.5h-1.5zM589.0 142.6h1.5v1.5h-1.5zM613.0 142.6h1.5v1.5h-1.5zM625.0 142.6h1.5v1.5h-1.5zM637.0 142.6h1.5v1.5h-1.5zM649.0 142.6h1.5v1.5h-1.5zM673.0 142.6h1.5v1.5h-1.5zM685.0 142.6h1.5v1.5h-1.5zM697.0 142.6h1.5v1.5h-1.5zM709.0 142.6h1.5v1.5h-1.5zM733.0 142.6h1.5v1.5h-1.5zM745.0 142.6h1.5v1.5h-1.5zM757.0 142.6h1.5v1.5h-1.5zM769.0 142.6h1.5v1.5h-1.5zM793.0 142.6h1.5v1.5h-1.5zM805.0 142.6h1.5v1.5h-1.5zM817.0 142.6h1.5v1.5h-1.5zM829.0 142.6h1.5v1.5h-1.5zM853.0 142.6h1.5v1.5h-1.5zM865.0 142.6h1.5v1.5h-1.5zM877.0 142.6h1.5v1.5h-1.5zM889.0 142.6h1.5v1.5h-1.5zM913.0 142.6h1.5v1.5h-1.5zM925.0 142.6h1.5v1.5h-1.5zM36.9 202.6h1.5v1.5h-1.5zM48.9 202.6h1.5v1.5h-1.5zM72.9 202.6h1.5v1.5h-1.5zM84.9 202.6h1.5v1.5h-1.5zM96.9 202.6h1.5v1.5h-1.5zM108.9 202.6h1.5v1.5h-1.5zM132.9 202.6h1.5v1.5h-1.5zM144.9 202.6h1.5v1.5h-1.5zM156.9 202.6h1.5v1.5h-1.5zM168.9 202.6h1.5v1.5h-1.5zM192.9 202.6h1.5v1.5h-1.5zM204.9 202.6h1.5v1.5h-1.5zM216.9 202.6h1.5v1.5h-1.5zM228.9 202.6h1.5v1.5h-1.5zM252.9 202.6h1.5v1.5h-1.5zM264.9 202.6h1.5v1.5h-1.5zM276.9 202.6h1.5v1.5h-1.5zM288.9 202.6h1.5v1.5h-1.5zM312.9 202.6h1.5v1.5h-1.5zM324.9 202.6h1.5v1.5h-1.5zM336.9 202.6h1.5v1.5h-1.5zM348.9 202.6h1.5v1.5h-1.5zM372.9 202.6h1.5v1.5h-1.5zM384.9 202.6h1.5v1.5h-1.5zM396.9 202.6h1.5v1.5h-1.5zM408.9 202.6h1.5v1.5h-1.5zM432.9 202.6h1.5v1.5h-1.5zM444.9 202.6h1.5v1.5h-1.5zM456.9 202.6h1.5v1.5h-1.5zM468.9 202.6h1.5v1.5h-1.5zM492.9 202.6h1.5v1.5h-1.5zM504.9 202.6h1.5v1.5h-1.5zM517.0 202.6h1.5v1.5h-1.5zM529.0 202.6h1.5v1.5h-1.5zM553.0 202.6h1.5v1.5h-1.5zM565.0 202.6h1.5v1.5h-1.5zM577.0 202.6h1.5v1.5h-1.5zM589.0 202.6h1.5v1.5h-1.5zM613.0 202.6h1.5v1.5h-1.5zM625.0 202.6h1.5v1.5h-1.5zM637.0 202.6h1.5v1.5h-1.5zM649.0 202.6h1.5v1.5h-1.5zM673.0 202.6h1.5v1.5h-1.5zM685.0 202.6h1.5v1.5h-1.5zM697.0 202.6h1.5v1.5h-1.5zM709.0 202.6h1.5v1.5h-1.5zM733.0 202.6h1.5v1.5h-1.5zM745.0 202.6h1.5v1.5h-1.5zM757.0 202.6h1.5v1.5h-1.5zM769.0 202.6h1.5v1.5h-1.5zM793.0 202.6h1.5v1.5h-1.5zM805.0 202.6h1.5v1.5h-1.5zM817.0 202.6h1.5v1.5h-1.5zM829.0 202.6h1.5v1.5h-1.5zM853.0 202.6h1.5v1.5h-1.5zM865.0 202.6h1.5v1.5h-1.5zM877.0 202.6h1.5v1.5h-1.5zM889.0 202.6h1.5v1.5h-1.5zM913.0 202.6h1.5v1.5h-1.5zM925.0 202.6h1.5v1.5h-1.5zM36.9 262.6h1.5v1.5h-1.5zM48.9 262.6h1.5v1.5h-1.5zM72.9 262.6h1.5v1.5h-1.5zM84.9 262.6h1.5v1.5h-1.5zM96.9 262.6h1.5v1.5h-1.5zM108.9 262.6h1.5v1.5h-1.5zM132.9 262.6h1.5v1.5h-1.5zM144.9 262.6h1.5v1.5h-1.5zM156.9 262.6h1.5v1.5h-1.5zM168.9 262.6h1.5v1.5h-1.5zM192.9 262.6h1.5v1.5h-1.5zM204.9 262.6h1.5v1.5h-1.5zM216.9 262.6h1.5v1.5h-1.5zM228.9 262.6h1.5v1.5h-1.5zM252.9 262.6h1.5v1.5h-1.5zM264.9 262.6h1.5v1.5h-1.5zM276.9 262.6h1.5v1.5h-1.5zM288.9 262.6h1.5v1.5h-1.5zM312.9 262.6h1.5v1.5h-1.5zM324.9 262.6h1.5v1.5h-1.5zM336.9 262.6h1.5v1.5h-1.5zM348.9 262.6h1.5v1.5h-1.5zM372.9 262.6h1.5v1.5h-1.5zM384.9 262.6h1.5v1.5h-1.5zM396.9 262.6h1.5v1.5h-1.5zM408.9 262.6h1.5v1.5h-1.5zM432.9 262.6h1.5v1.5h-1.5zM444.9 262.6h1.5v1.5h-1.5zM456.9 262.6h1.5v1.5h-1.5zM468.9 262.6h1.5v1.5h-1.5zM492.9 262.6h1.5v1.5h-1.5zM504.9 262.6h1.5v1.5h-1.5zM517.0 262.6h1.5v1.5h-1.5zM529.0 262.6h1.5v1.5h-1.5zM553.0 262.6h1.5v1.5h-1.5zM565.0 262.6h1.5v1.5h-1.5zM577.0 262.6h1.5v1.5h-1.5zM589.0 262.6h1.5v1.5h-1.5zM613.0 262.6h1.5v1.5h-1.5zM625.0 262.6h1.5v1.5h-1.5zM637.0 262.6h1.5v1.5h-1.5zM649.0 262.6h1.5v1.5h-1.5zM673.0 262.6h1.5v1.5h-1.5zM685.0 262.6h1.5v1.5h-1.5zM697.0 262.6h1.5v1.5h-1.5zM709.0 262.6h1.5v1.5h-1.5zM733.0 262.6h1.5v1.5h-1.5zM745.0 262.6h1.5v1.5h-1.5zM757.0 262.6h1.5v1.5h-1.5zM769.0 262.6h1.5v1.5h-1.5zM793.0 262.6h1.5v1.5h-1.5zM805.0 262.6h1.5v1.5h-1.5zM817.0 262.6h1.5v1.5h-1.5zM829.0 262.6h1.5v1.5h-1.5zM853.0 262.6h1.5v1.5h-1.5zM865.0 262.6h1.5v1.5h-1.5zM877.0 262.6h1.5v1.5h-1.5zM889.0 262.6h1.5v1.5h-1.5zM913.0 262.6h1.5v1.5h-1.5zM925.0 262.6h1.5v1.5h-1.5zM36.9 382.6h1.5v1.5h-1.5zM48.9 382.6h1.5v1.5h-1.5zM72.9 382.6h1.5v1.5h-1.5zM84.9 382.6h1.5v1.5h-1.5zM96.9 382.6h1.5v1.5h-1.5zM108.9 382.6h1.5v1.5h-1.5zM132.9 382.6h1.5v1.5h-1.5zM144.9 382.6h1.5v1.5h-1.5zM156.9 382.6h1.5v1.5h-1.5zM168.9 382.6h1.5v1.5h-1.5zM192.9 382.6h1.5v1.5h-1.5zM204.9 382.6h1.5v1.5h-1.5zM216.9 382.6h1.5v1.5h-1.5zM228.9 382.6h1.5v1.5h-1.5zM252.9 382.6h1.5v1.5h-1.5zM264.9 382.6h1.5v1.5h-1.5zM276.9 382.6h1.5v1.5h-1.5zM288.9 382.6h1.5v1.5h-1.5zM312.9 382.6h1.5v1.5h-1.5zM324.9 382.6h1.5v1.5h-1.5zM336.9 382.6h1.5v1.5h-1.5zM348.9 382.6h1.5v1.5h-1.5zM372.9 382.6h1.5v1.5h-1.5zM384.9 382.6h1.5v1.5h-1.5zM396.9 382.6h1.5v1.5h-1.5zM408.9 382.6h1.5v1.5h-1.5zM432.9 382.6h1.5v1.5h-1.5zM444.9 382.6h1.5v1.5h-1.5zM456.9 382.6h1.5v1.5h-1.5zM468.9 382.6h1.5v1.5h-1.5zM492.9 382.6h1.5v1.5h-1.5zM504.9 382.6h1.5v1.5h-1.5zM517.0 382.6h1.5v1.5h-1.5zM529.0 382.6h1.5v1.5h-1.5zM553.0 382.6h1.5v1.5h-1.5zM565.0 382.6h1.5v1.5h-1.5zM577.0 382.6h1.5v1.5h-1.5zM589.0 382.6h1.5v1.5h-1.5zM613.0 382.6h1.5v1.5h-1.5zM625.0 382.6h1.5v1.5h-1.5zM637.0 382.6h1.5v1.5h-1.5zM649.0 382.6h1.5v1.5h-1.5zM673.0 382.6h1.5v1.5h-1.5zM685.0 382.6h1.5v1.5h-1.5zM697.0 382.6h1.5v1.5h-1.5zM709.0 382.6h1.5v1.5h-1.5zM733.0 382.6h1.5v1.5h-1.5zM745.0 382.6h1.5v1.5h-1.5zM757.0 382.6h1.5v1.5h-1.5zM769.0 382.6h1.5v1.5h-1.5zM793.0 382.6h1.5v1.5h-1.5zM805.0 382.6h1.5v1.5h-1.5zM817.0 382.6h1.5v1.5h-1.5zM829.0 382.6h1.5v1.5h-1.5zM853.0 382.6h1.5v1.5h-1.5zM865.0 382.6h1.5v1.5h-1.5zM877.0 382.6h1.5v1.5h-1.5zM889.0 382.6h1.5v1.5h-1.5zM913.0 382.6h1.5v1.5h-1.5zM925.0 382.6h1.5v1.5h-1.5zM36.9 442.6h1.5v1.5h-1.5zM48.9 442.6h1.5v1.5h-1.5zM72.9 442.6h1.5v1.5h-1.5zM84.9 442.6h1.5v1.5h-1.5zM96.9 442.6h1.5v1.5h-1.5zM108.9 442.6h1.5v1.5h-1.5zM132.9 442.6h1.5v1.5h-1.5zM144.9 442.6h1.5v1.5h-1.5zM156.9 442.6h1.5v1.5h-1.5zM168.9 442.6h1.5v1.5h-1.5zM192.9 442.6h1.5v1.5h-1.5zM204.9 442.6h1.5v1.5h-1.5zM216.9 442.6h1.5v1.5h-1.5zM228.9 442.6h1.5v1.5h-1.5zM252.9 442.6h1.5v1.5h-1.5zM264.9 442.6h1.5v1.5h-1.5zM276.9 442.6h1.5v1.5h-1.5zM288.9 442.6h1.5v1.5h-1.5zM312.9 442.6h1.5v1.5h-1.5zM324.9 442.6h1.5v1.5h-1.5zM336.9 442.6h1.5v1.5h-1.5zM348.9 442.6h1.5v1.5h-1.5zM372.9 442.6h1.5v1.5h-1.5zM384.9 442.6h1.5v1.5h-1.5zM396.9 442.6h1.5v1.5h-1.5zM408.9 442.6h1.5v1.5h-1.5zM432.9 442.6h1.5v1.5h-1.5zM444.9 442.6h1.5v1.5h-1.5zM456.9 442.6h1.5v1.5h-1.5zM468.9 442.6h1.5v1.5h-1.5zM492.9 442.6h1.5v1.5h-1.5zM504.9 442.6h1.5v1.5h-1.5zM517.0 442.6h1.5v1.5h-1.5zM529.0 442.6h1.5v1.5h-1.5zM553.0 442.6h1.5v1.5h-1.5zM565.0 442.6h1.5v1.5h-1.5zM577.0 442.6h1.5v1.5h-1.5zM589.0 442.6h1.5v1.5h-1.5zM613.0 442.6h1.5v1.5h-1.5zM625.0 442.6h1.5v1.5h-1.5zM637.0 442.6h1.5v1.5h-1.5zM649.0 442.6h1.5v1.5h-1.5zM673.0 442.6h1.5v1.5h-1.5zM685.0 442.6h1.5v1.5h-1.5zM697.0 442.6h1.5v1.5h-1.5zM709.0 442.6h1.5v1.5h-1.5zM733.0 442.6h1.5v1.5h-1.5zM745.0 442.6h1.5v1.5h-1.5zM757.0 442.6h1.5v1.5h-1.5zM769.0 442.6h1.5v1.5h-1.5zM793.0 442.6h1.5v1.5h-1.5zM805.0 442.6h1.5v1.5h-1.5zM817.0 442.6h1.5v1.5h-1.5zM829.0 442.6h1.5v1.5h-1.5zM853.0 442.6h1.5v1.5h-1.5zM865.0 442.6h1.5v1.5h-1.5zM877.0 442.6h1.5v1.5h-1.5zM889.0 442.6h1.5v1.5h-1.5zM913.0 442.6h1.5v1.5h-1.5zM925.0 442.6h1.5v1.5h-1.5zM36.9 502.6h1.5v1.5h-1.5zM48.9 502.6h1.5v1.5h-1.5zM72.9 502.6h1.5v1.5h-1.5zM84.9 502.6h1.5v1.5h-1.5zM96.9 502.6h1.5v1.5h-1.5zM108.9 502.6h1.5v1.5h-1.5zM132.9 502.6h1.5v1.5h-1.5zM144.9 502.6h1.5v1.5h-1.5zM156.9 502.6h1.5v1.5h-1.5zM168.9 502.6h1.5v1.5h-1.5zM192.9 502.6h1.5v1.5h-1.5zM204.9 502.6h1.5v1.5h-1.5zM216.9 502.6h1.5v1.5h-1.5zM228.9 502.6h1.5v1.5h-1.5zM252.9 502.6h1.5v1.5h-1.5zM264.9 502.6h1.5v1.5h-1.5zM276.9 502.6h1.5v1.5h-1.5zM288.9 502.6h1.5v1.5h-1.5zM312.9 502.6h1.5v1.5h-1.5zM324.9 502.6h1.5v1.5h-1.5zM336.9 502.6h1.5v1.5h-1.5zM348.9 502.6h1.5v1.5h-1.5zM372.9 502.6h1.5v1.5h-1.5zM384.9 502.6h1.5v1.5h-1.5zM396.9 502.6h1.5v1.5h-1.5zM408.9 502.6h1.5v1.5h-1.5zM432.9 502.6h1.5v1.5h-1.5zM444.9 502.6h1.5v1.5h-1.5zM456.9 502.6h1.5v1.5h-1.5zM468.9 502.6h1.5v1.5h-1.5zM492.9 502.6h1.5v1.5h-1.5zM504.9 502.6h1.5v1.5h-1.5zM517.0 502.6h1.5v1.5h-1.5zM529.0 502.6h1.5v1.5h-1.5zM553.0 502.6h1.5v1.5h-1.5zM565.0 502.6h1.5v1.5h-1.5zM577.0 502.6h1.5v1.5h-1.5zM589.0 502.6h1.5v1.5h-1.5zM613.0 502.6h1.5v1.5h-1.5zM625.0 502.6h1.5v1.5h-1.5zM637.0 502.6h1.5v1.5h-1.5zM649.0 502.6h1.5v1.5h-1.5zM673.0 502.6h1.5v1.5h-1.5zM685.0 502.6h1.5v1.5h-1.5zM697.0 502.6h1.5v1.5h-1.5zM709.0 502.6h1.5v1.5h-1.5zM733.0 502.6h1.5v1.5h-1.5zM745.0 502.6h1.5v1.5h-1.5zM757.0 502.6h1.5v1.5h-1.5zM769.0 502.6h1.5v1.5h-1.5zM793.0 502.6h1.5v1.5h-1.5zM805.0 502.6h1.5v1.5h-1.5zM817.0 502.6h1.5v1.5h-1.5zM829.0 502.6h1.5v1.5h-1.5zM853.0 502.6h1.5v1.5h-1.5zM865.0 502.6h1.5v1.5h-1.5zM877.0 502.6h1.5v1.5h-1.5zM889.0 502.6h1.5v1.5h-1.5zM913.0 502.6h1.5v1.5h-1.5zM925.0 502.6h1.5v1.5h-1.5zM36.9 562.6h1.5v1.5h-1.5zM48.9 562.6h1.5v1.5h-1.5zM72.9 562.6h1.5v1.5h-1.5zM84.9 562.6h1.5v1.5h-1.5zM96.9 562.6h1.5v1.5h-1.5zM108.9 562.6h1.5v1.5h-1.5zM132.9 562.6h1.5v1.5h-1.5zM144.9 562.6h1.5v1.5h-1.5zM156.9 562.6h1.5v1.5h-1.5zM168.9 562.6h1.5v1.5h-1.5zM192.9 562.6h1.5v1.5h-1.5zM204.9 562.6h1.5v1.5h-1.5zM216.9 562.6h1.5v1.5h-1.5zM228.9 562.6h1.5v1.5h-1.5zM252.9 562.6h1.5v1.5h-1.5zM264.9 562.6h1.5v1.5h-1.5zM276.9 562.6h1.5v1.5h-1.5zM288.9 562.6h1.5v1.5h-1.5zM312.9 562.6h1.5v1.5h-1.5zM324.9 562.6h1.5v1.5h-1.5zM336.9 562.6h1.5v1.5h-1.5zM348.9 562.6h1.5v1.5h-1.5zM372.9 562.6h1.5v1.5h-1.5zM384.9 562.6h1.5v1.5h-1.5zM396.9 562.6h1.5v1.5h-1.5zM408.9 562.6h1.5v1.5h-1.5zM432.9 562.6h1.5v1.5h-1.5zM444.9 562.6h1.5v1.5h-1.5zM456.9 562.6h1.5v1.5h-1.5zM468.9 562.6h1.5v1.5h-1.5zM492.9 562.6h1.5v1.5h-1.5zM504.9 562.6h1.5v1.5h-1.5zM517.0 562.6h1.5v1.5h-1.5zM529.0 562.6h1.5v1.5h-1.5zM553.0 562.6h1.5v1.5h-1.5zM565.0 562.6h1.5v1.5h-1.5zM577.0 562.6h1.5v1.5h-1.5zM589.0 562.6h1.5v1.5h-1.5zM613.0 562.6h1.5v1.5h-1.5zM625.0 562.6h1.5v1.5h-1.5zM637.0 562.6h1.5v1.5h-1.5zM649.0 562.6h1.5v1.5h-1.5zM673.0 562.6h1.5v1.5h-1.5zM685.0 562.6h1.5v1.5h-1.5zM697.0 562.6h1.5v1.5h-1.5zM709.0 562.6h1.5v1.5h-1.5zM733.0 562.6h1.5v1.5h-1.5zM745.0 562.6h1.5v1.5h-1.5zM757.0 562.6h1.5v1.5h-1.5zM769.0 562.6h1.5v1.5h-1.5zM793.0 562.6h1.5v1.5h-1.5zM805.0 562.6h1.5v1.5h-1.5zM817.0 562.6h1.5v1.5h-1.5zM829.0 562.6h1.5v1.5h-1.5zM853.0 562.6h1.5v1.5h-1.5zM865.0 562.6h1.5v1.5h-1.5zM877.0 562.6h1.5v1.5h-1.5zM889.0 562.6h1.5v1.5h-1.5zM913.0 562.6h1.5v1.5h-1.5zM925.0 562.6h1.5v1.5h-1.5z"/>
<path fill="#e0e0e0" d="M479.8 34.7h3.8v1.4h-3.8zM479.8 46.7h3.8v1.4h-3.8zM479.8 58.7h3.8v1.4h-3.8zM479.8 70.7h3.8v1.4h-3.8zM479.8 82.7h3.8v1.4h-3.8zM479.8 94.7h3.8v1.4h-3.8zM479.8 106.7h3.8v1.4h-3.8zM479.8 118.7h3.8v1.4h-3.8zM479.8 130.7h3.8v1.4h-3.8zM479.8 142.7h3.8v1.4h-3.8zM479.8 154.7h3.8v1.4h-3.8zM479.8 166.7h3.8v1.4h-3.8zM479.8 178.7h3.8v1.4h-3.8zM479.8 190.7h3.8v1.4h-3.8zM479.8 202.7h3.8v1.4h-3.8zM479.8 214.7h3.8v1.4h-3.8zM479.8 226.7h3.8v1.4h-3.8zM479.8 238.7h3.8v1.4h-3.8zM479.8 250.7h3.8v1.4h-3.8zM479.8 262.7h3.8v1.4h-3.8zM479.8 274.7h3.8v1.4h-3.8zM479.8 286.7h3.8v1.4h-3.8zM479.8 298.7h3.8v1.4h-3.8zM479.8 310.7h3.8v1.4h-3.8zM479.8 322.7h3.8v1.4h-3.8zM479.8 334.7h3.8v1.4h-3.8zM479.8 346.7h3.8v1.4h-3.8zM479.8 358.7h3.8v1.4h-3.8zM479.8 370.7h3.8v1.4h-3.8zM479.8 382.7h3.8v1.4h-3.8zM479.8 394.7h3.8v1.4h-3.8zM479.8 406.7h3.8v1.4h-3.8zM479.8 418.7h3.8v1.4h-3.8zM479.8 430.7h3.8v1.4h-3.8zM479.8 442.7h3.8v1.4h-3.8zM479.8 454.7h3.8v1.4h-3.8zM479.8 466.7h3.8v1.4h-3.8zM479.8 478.7h3.8v1.4h-3.8zM479.8 490.7h3.8v1.4h-3.8zM479.8 502.7h3.8v1.4h-3.8zM479.8 514.7h3.8v1.4h-3.8zM479.8 526.7h3.8v1.4h-3.8zM479.8 538.7h3.8v1.4h-3.8zM479.8 550.7h3.8v1.4h-3.8zM479.8 562.7h3.8v1.4h-3.8zM479.8 574.7h3.8v1.4h-3.8zM479.8 586.7h3.8v1.4h-3.8zM479.8 598.7h3.8v1.4h-3.8zM479.8 610.7h3.8v1.4h-3.8zM37.0 321.3h1.4v4.2h-1.4zM49.0 321.3h1.4v4.2h-1.4zM61.0 321.3h1.4v4.2h-1.4zM73.0 321.3h1.4v4.2h-1.4zM85.0 321.3h1.4v4.2h-1.4zM97.0 321.3h1.4v4.2h-1.4zM109.0 321.3h1.4v4.2h-1.4zM121.0 321.3h1.4v4.2h-1.4zM133.0 321.3h1.4v4.2h-1.4zM145.0 321.3h1.4v4.2h-1.4zM157.0 321.3h1.4v4.2h-1.4zM169.0 321.3h1.4v4.2h-1.4zM181.0 321.3h1.4v4.2h-1.4zM193.0 321.3h1.4v4.2h-1.4zM205.0 321.3h1.4v4.2h-1.4zM217.0 321.3h1.4v4.2h-1.4zM229.0 321.3h1.4v4.2h-1.4zM241.0 321.3h1.4v4.2h-1.4zM253.0 321.3h1.4v4.2h-1.4zM265.0 321.3h1.4v4.2h-1.4zM277.0 321.3h1.4v4.2h-1.4zM289.0 321.3h1.4v4.2h-1.4zM301.0 321.3h1.4v4.2h-1.4zM313.0 321.3h1.4v4.2h-1.4zM325.0 321.3h1.4v4.2h-1.4zM337.0 321.3h1.4v4.2h-1.4zM349.0 321.3h1.4v4.2h-1.4zM361.0 321.3h1.4v4.2h-1.4zM373.0 321.3h1.4v4.2h-1.4zM385.0 321.3h1.4v4.2h-1.4zM397.0 321.3h1.4v4.2h-1.4zM409.0 321.3h1.4v4.2h-1.4zM421.0 321.3h1.4v4.2h-1.4zM433.0 321.3h1.4v4.2h-1.4zM445.0 321.3h1.4v4.2h-1.4zM457.0 321.3h1.4v4.2h-1.4zM469.0 321.3h1.4v4.2h-1.4zM481.0 321.3h1.4v4.2h-1.4zM493.0 321.3h1.4v4.2h-1.4zM505.0 321.3h1.4v4.2h-1.4zM517.0 321.3h1.4v4.2h-1.4zM529.0 321.3h1.4v4.2h-1.4zM541.0 321.3h1.4v4.2h-1.4zM553.0 321.3h1.4v4.2h-1.4zM565.0 321.3h1.4v4.2h-1.4zM577.0 321.3h1.4v4.2h-1.4zM589.0 321.3h1.4v4.2h-1.4zM601.0 321.3h1.4v4.2h-1.4zM613.0 321.3h1.4v4.2h-1.4zM625.0 321.3h1.4v4.2h-1.4zM637.0 321.3h1.4v4.2h-1.4zM649.0 321.3h1.4v4.2h-1.4zM661.0 321.3h1.4v4.2h-1.4zM673.0 321.3h1.4v4.2h-1.4zM685.0 321.3h1.4v4.2h-1.4zM697.0 321.3h1.4v4.2h-1.4zM709.0 321.3h1.4v4.2h-1.4zM721.0 321.3h1.4v4.2h-1.4zM733.0 321.3h1.4v4.2h-1.4zM745.0 321.3h1.4v4.2h-1.4zM757.0 321.3h1.4v4.2h-1.4zM769.0 321.3h1.4v4.2h-1.4zM781.0 321.3h1.4v4.2h-1.4zM793.0 321.3h1.4v4.2h-1.4zM805.0 321.3h1.4v4.2h-1.4zM817.0 321.3h1.4v4.2h-1.4zM829.0 321.3h1.4v4.2h-1.4zM841.0 321.3h1.4v4.2h-1.4zM853.0 321.3h1.4v4.2h-1.4zM865.0 321.3h1.4v4.2h-1.4zM877.0 321.3h1.4v4.2h-1.4zM889.0 321.3h1.4v4.2h-1.4zM901.0 321.3h1.4v4.2h-1.4zM913.0 321.3h1.4v4.2h-1.4zM925.0 321.3h1.4v4.2h-1.4zM174.9 322.7h13.6v1.4h-13.6zM181.0 316.6h1.4v13.6h-1.4zM774.9 322.7h13.6v1.4h-13.6zM781.0 316.6h1.4v13.6h-1.4z"/>
<path fill="#f4f4f4" d="M37.0 24.8h1.3v2.6h-1.3zM37.0 618.8h1.3v2.6h-1.3zM49.0 24.8h1.3v2.6h-1.3zM49.0 618.8h1.3v2.6h-1.3zM61.0 24.8h1.3v5.8h-1.3zM61.0 615.6h1.3v5.8h-1.3zM73.0 24.8h1.3v2.6h-1.3zM73.0 618.8h1.3v2.6h-1.3zM85.0 24.8h1.3v2.6h-1.3zM85.0 618.8h1.3v2.6h-1.3zM97.0 24.8h1.3v2.6h-1.3zM97.0 618.8h1.3v2.6h-1.3zM109.0 24.8h1.3v2.6h-1.3zM109.0 618.8h1.3v2.6h-1.3zM121.0 24.8h1.3v5.8h-1.3zM121.0 615.6h1.3v5.8h-1.3zM133.0 24.8h1.3v2.6h-1.3zM133.0 618.8h1.3v2.6h-1.3zM145.0 24.8h1.3v2.6h-1.3zM145.0 618.8h1.3v2.6h-1.3zM157.0 24.8h1.3v2.6h-1.3zM157.0 618.8h1.3v2.6h-1.3zM169.0 24.8h1.3v2.6h-1.3zM169.0 618.8h1.3v2.6h-1.3zM181.0 24.8h1.3v5.8h-1.3zM181.0 615.6h1.3v5.8h-1.3zM193.0 24.8h1.3v2.6h-1.3zM193.0 618.8h1.3v2.6h-1.3zM205.0 24.8h1.3v2.6h-1.3zM205.0 618.8h1.3v2.6h-1.3zM217.0 24.8h1.3v2.6h-1.3zM217.0 618.8h1.3v2.6h-1.3zM229.0 24.8h1.3v2.6h-1.3zM229.0 618.8h1.3v2.6h-1.3zM241.0 24.8h1.3v5.8h-1.3zM241.0 615.6h1.3v5.8h-1.3zM253.0 24.8h1.3v2.6h-1.3zM253.0 618.8h1.3v2.6h-1.3zM265.1 24.8h1.3v2.6h-1.3zM265.1 618.8h1.3v2.6h-1.3zM277.1 24.8h1.3v2.6h-1.3zM277.1 618.8h1.3v2.6h-1.3zM289.1 24.8h1.3v2.6h-1.3zM289.1 618.8h1.3v2.6h-1.3zM301.1 24.8h1.3v5.8h-1.3zM301.1 615.6h1.3v5.8h-1.3zM313.1 24.8h1.3v2.6h-1.3zM313.1 618.8h1.3v2.6h-1.3zM325.1 24.8h1.3v2.6h-1.3zM325.1 618.8h1.3v2.6h-1.3zM337.1 24.8h1.3v2.6h-1.3zM337.1 618.8h1.3v2.6h-1.3zM349.1 24.8h1.3v2.6h-1.3zM349.1 618.8h1.3v2.6h-1.3zM361.1 24.8h1.3v5.8h-1.3zM361.1 615.6h1.3v5.8h-1.3zM373.1 24.8h1.3v2.6h-1.3zM373.1 618.8h1.3v2.6h-1.3zM385.1 24.8h1.3v2.6h-1.3zM385.1 618.8h1.3v2.6h-1.3zM397.1 24.8h1.3v2.6h-1.3zM397.1 618.8h1.3v2.6h-1.3zM409.1 24.8h1.3v2.6h-1.3zM409.1 618.8h1.3v2.6h-1.3zM421.1 24.8h1.3v5.8h-1.3zM421.1 615.6h1.3v5.8h-1.3zM433.1 24.8h1.3v2.6h-1.3zM433.1 618.8h1.3v2.6h-1.3zM445.1 24.8h1.3v2.6h-1.3zM445.1 618.8h1.3v2.6h-1.3zM457.1 24.8h1.3v2.6h-1.3zM457.1 618.8h1.3v2.6h-1.3zM469.1 24.8h1.3v2.6h-1.3zM469.1 618.8h1.3v2.6h-1.3zM481.1 24.8h1.3v5.8h-1.3zM481.1 615.6h1.3v5.8h-1.3zM493.1 24.8h1.3v2.6h-1.3zM493.1 618.8h1.3v2.6h-1.3zM505.1 24.8h1.3v2.6h-1.3zM505.1 618.8h1.3v2.6h-1.3zM517.1 24.8h1.3v2.6h-1.3zM517.1 618.8h1.3v2.6h-1.3zM529.1 24.8h1.3v2.6h-1.3zM529.1 618.8h1.3v2.6h-1.3zM541.1 24.8h1.3v5.8h-1.3zM541.1 615.6h1.3v5.8h-1.3zM553.1 24.8h1.3v2.6h-1.3zM553.1 618.8h1.3v2.6h-1.3zM565.1 24.8h1.3v2.6h-1.3zM565.1 618.8h1.3v2.6h-1.3zM577.1 24.8h1.3v2.6h-1.3zM577.1 618.8h1.3v2.6h-1.3zM589.1 24.8h1.3v2.6h-1.3zM589.1 618.8h1.3v2.6h-1.3zM601.1 24.8h1.3v5.8h-1.3zM601.1 615.6h1.3v5.8h-1.3zM613.1 24.8h1.3v2.6h-1.3zM613.1 618.8h1.3v2.6h-1.3zM625.1 24.8h1.3v2.6h-1.3zM625.1 618.8h1.3v2.6h-1.3zM637.1 24.8h1.3v2.6h-1.3zM637.1 618.8h1.3v2.6h-1.3zM649.1 24.8h1.3v2.6h-1.3zM649.1 618.8h1.3v2.6h-1.3zM661.1 24.8h1.3v5.8h-1.3zM661.1 615.6h1.3v5.8h-1.3zM673.1 24.8h1.3v2.6h-1.3zM673.1 618.8h1.3v2.6h-1.3zM685.1 24.8h1.3v2.6h-1.3zM685.1 618.8h1.3v2.6h-1.3zM697.1 24.8h1.3v2.6h-1.3zM697.1 618.8h1.3v2.6h-1.3zM709.1 24.8h1.3v2.6h-1.3zM709.1 618.8h1.3v2.6h-1.3zM721.1 24.8h1.3v5.8h-1.3zM721.1 615.6h1.3v5.8h-1.3zM733.1 24.8h1.3v2.6h-1.3zM733.1 618.8h1.3v2.6h-1.3zM745.1 24.8h1.3v2.6h-1.3zM745.1 618.8h1.3v2.6h-1.3zM757.1 24.8h1.3v2.6h-1.3zM757.1 618.8h1.3v2.6h-1.3zM769.1 24.8h1.3v2.6h-1.3zM769.1 618.8h1.3v2.6h-1.3zM781.1 24.8h1.3v5.8h-1.3zM781.1 615.6h1.3v5.8h-1.3zM793.1 24.8h1.3v2.6h-1.3zM793.1 618.8h1.3v2.6h-1.3zM805.1 24.8h1.3v2.6h-1.3zM805.1 618.8h1.3v2.6h-1.3zM817.1 24.8h1.3v2.6h-1.3zM817.1 618.8h1.3v2.6h-1.3zM829.1 24.8h1.3v2.6h-1.3zM829.1 618.8h1.3v2.6h-1.3zM841.1 24.8h1.3v5.8h-1.3zM841.1 615.6h1.3v5.8h-1.3zM853.1 24.8h1.3v2.6h-1.3zM853.1 618.8h1.3v2.6h-1.3zM865.1 24.8h1.3v2.6h-1.3zM865.1 618.8h1.3v2.6h-1.3zM877.1 24.8h1.3v2.6h-1.3zM877.1 618.8h1.3v2.6h-1.3zM889.1 24.8h1.3v2.6h-1.3zM889.1 618.8h1.3v2.6h-1.3zM901.1 24.8h1.3v5.8h-1.3zM901.1 615.6h1.3v5.8h-1.3zM913.1 24.8h1.3v2.6h-1.3zM913.1 618.8h1.3v2.6h-1.3zM925.1 24.8h1.3v2.6h-1.3zM925.1 618.8h1.3v2.6h-1.3zM26.2 34.7h3.8v1.3h-3.8zM930.0 34.7h3.8v1.3h-3.8zM26.2 46.7h3.8v1.3h-3.8zM930.0 46.7h3.8v1.3h-3.8zM26.2 58.7h3.8v1.3h-3.8zM930.0 58.7h3.8v1.3h-3.8zM26.2 70.7h3.8v1.3h-3.8zM930.0 70.7h3.8v1.3h-3.8zM26.2 82.7h8.4v1.3h-8.4zM925.4 82.7h8.4v1.3h-8.4zM26.2 94.7h3.8v1.3h-3.8zM930.0 94.7h3.8v1.3h-3.8zM26.2 106.7h3.8v1.3h-3.8zM930.0 106.7h3.8v1.3h-3.8zM26.2 118.7h3.8v1.3h-3.8zM930.0 118.7h3.8v1.3h-3.8zM26.2 130.7h3.8v1.3h-3.8zM930.0 130.7h3.8v1.3h-3.8zM26.2 142.7h8.4v1.3h-8.4zM925.4 142.7h8.4v1.3h-8.4zM26.2 154.7h3.8v1.3h-3.8zM930.0 154.7h3.8v1.3h-3.8zM26.2 166.7h3.8v1.3h-3.8zM930.0 166.7h3.8v1.3h-3.8zM26.2 178.7h3.8v1.3h-3.8zM930.0 178.7h3.8v1.3h-3.8zM26.2 190.7h3.8v1.3h-3.8zM930.0 190.7h3.8v1.3h-3.8zM26.2 202.7h8.4v1.3h-8.4zM925.4 202.7h8.4v1.3h-8.4zM26.2 214.7h3.8v1.3h-3.8zM930.0 214.7h3.8v1.3h-3.8zM26.2 226.7h3.8v1.3h-3.8zM930.0 226.7h3.8v1.3h-3.8zM26.2 238.7h3.8v1.3h-3.8zM930.0 238.7h3.8v1.3h-3.8zM26.2 250.7h3.8v1.3h-3.8zM930.0 250.7h3.8v1.3h-3.8zM26.2 262.8h8.4v1.3h-8.4zM925.4 262.8h8.4v1.3h-8.4zM26.2 274.8h3.8v1.3h-3.8zM930.0 274.8h3.8v1.3h-3.8zM26.2 286.8h3.8v1.3h-3.8zM930.0 286.8h3.8v1.3h-3.8zM26.2 298.8h3.8v1.3h-3.8zM930.0 298.8h3.8v1.3h-3.8zM26.2 310.8h3.8v1.3h-3.8zM930.0 310.8h3.8v1.3h-3.8zM26.2 322.8h8.4v1.3h-8.4zM925.4 322.8h8.4v1.3h-8.4zM26.2 334.8h3.8v1.3h-3.8zM930.0 334.8h3.8v1.3h-3.8zM26.2 346.8h3.8v1.3h-3.8zM930.0 346.8h3.8v1.3h-3.8zM26.2 358.8h3.8v1.3h-3.8zM930.0 358.8h3.8v1.3h-3.8zM26.2 370.8h3.8v1.3h-3.8zM930.0 370.8h3.8v1.3h-3.8zM26.2 382.8h8.4v1.3h-8.4zM925.4 382.8h8.4v1.3h-8.4zM26.2 394.8h3.8v1.3h-3.8zM930.0 394.8h3.8v1.3h-3.8zM26.2 406.8h3.8v1.3h-3.8zM930.0 406.8h3.8v1.3h-3.8zM26.2 418.8h3.8v1.3h-3.8zM930.0 418.8h3.8v1.3h-3.8zM26.2 430.8h3.8v1.3h-3.8zM930.0 430.8h3.8v1.3h-3.8zM26.2 442.8h8.4v1.3h-8.4zM925.4 442.8h8.4v1.3h-8.4zM26.2 454.8h3.8v1.3h-3.8zM930.0 454.8h3.8v1.3h-3.8zM26.2 466.8h3.8v1.3h-3.8zM930.0 466.8h3.8v1.3h-3.8zM26.2 478.8h3.8v1.3h-3.8zM930.0 478.8h3.8v1.3h-3.8zM26.2 490.8h3.8v1.3h-3.8zM930.0 490.8h3.8v1.3h-3.8zM26.2 502.8h8.4v1.3h-8.4zM925.4 502.8h8.4v1.3h-8.4zM26.2 514.8h3.8v1.3h-3.8zM930.0 514.8h3.8v1.3h-3.8zM26.2 526.8h3.8v1.3h-3.8zM930.0 526.8h3.8v1.3h-3.8zM26.2 538.8h3.8v1.3h-3.8zM930.0 538.8h3.8v1.3h-3.8zM26.2 550.8h3.8v1.3h-3.8zM930.0 550.8h3.8v1.3h-3.8zM26.2 562.8h8.4v1.3h-8.4zM925.4 562.8h8.4v1.3h-8.4zM26.2 574.8h3.8v1.3h-3.8zM930.0 574.8h3.8v1.3h-3.8zM26.2 586.8h3.8v1.3h-3.8zM930.0 586.8h3.8v1.3h-3.8zM26.2 598.8h3.8v1.3h-3.8zM930.0 598.8h3.8v1.3h-3.8zM26.2 610.8h3.8v1.3h-3.8zM930.0 610.8h3.8v1.3h-3.8z"/>
<path fill="#e8e820" d="M26.3 154.8h1.3v8.4h-1.3zM27.5 154.8h1.3v8.4h-1.3zM28.7 156.0h1.3v8.4h-1.3zM29.9 154.8h1.3v6.0h-1.3zM31.1 156.0h1.3v7.2h-1.3zM32.3 157.2h1.3v7.2h-1.3zM33.5 153.6h1.3v7.2h-1.3zM34.7 154.8h1.3v7.2h-1.3zM35.9 153.6h1.3v7.2h-1.3zM37.1 156.0h1.3v4.8h-1.3zM38.3 156.0h1.3v6.0h-1.3zM39.5 154.8h1.3v20.4h-1.3zM40.7 157.2h1.3v3.6h-1.3zM41.9 156.0h1.3v4.8h-1.3zM43.1 156.0h1.3v4.8h-1.3zM44.3 152.4h1.3v8.4h-1.3zM45.5 154.8h1.3v7.2h-1.3zM46.7 156.0h1.3v4.8h-1.3zM47.9 154.8h1.3v7.2h-1.3zM49.1 154.8h1.3v9.6h-1.3zM50.3 154.8h1.3v8.4h-1.3zM51.5 154.8h1.3v7.2h-1.3zM52.7 154.8h1.3v6.0h-1.3zM53.9 157.2h1.3v3.6h-1.3zM55.1 154.8h1.3v7.2h-1.3zM56.3 154.8h1.3v8.4h-1.3zM57.5 153.6h1.3v8.4h-1.3zM58.7 154.8h1.3v7.2h-1.3zM59.9 156.0h1.3v6.0h-1.3zM61.1 152.4h1.3v15.6h-1.3zM62.3 156.0h1.3v4.8h-1.3zM63.5 154.8h1.3v6.0h-1.3zM64.7 154.8h1.3v7.2h-1.3zM65.9 153.6h1.3v7.2h-1.3zM67.1 157.2h1.3v3.6h-1.3zM68.3 154.8h1.3v7.2h-1.3zM69.5 152.4h1.3v10.8h-1.3zM70.7 154.8h1.3v7.2h-1.3zM71.9 154.8h1.3v6.0h-1.3zM73.1 156.0h1.3v6.0h-1.3zM74.3 157.2h1.3v4.8h-1.3zM75.5 154.8h1.3v6.0h-1.3zM76.7 154.8h1.3v7.2h-1.3zM77.9 152.4h1.3v9.6h-1.3zM79.1 153.6h1.3v15.6h-1.3zM80.3 154.8h1.3v6.0h-1.3zM81.5 152.4h1.3v8.4h-1.3zM82.7 154.8h1.3v8.4h-1.3zM83.9 153.6h1.3v9.6h-1.3zM85.1 154.8h1.3v8.4h-1.3zM86.3 156.0h1.3v6.0h-1.3zM87.5 153.6h1.3v8.4h-1.3zM88.7 157.2h1.3v4.8h-1.3zM89.9 153.6h1.3v8.4h-1.3zM91.1 154.8h1.3v7.2h-1.3zM92.3 152.4h1.3v9.6h-1.3zM93.5 156.0h1.3v6.0h-1.3zM94.7 152.4h1.3v9.6h-1.3zM95.9 153.6h1.3v8.4h-1.3zM97.1 156.0h1.3v8.4h-1.3zM98.3 153.6h1.3v7.2h-1.3zM99.5 153.6h1.3v15.6h-1.3zM100.7 154.8h1.3v7.2h-1.3zM101.9 152.4h1.3v12.0h-1.3zM103.1 154.8h1.3v7.2h-1.3zM104.3 154.8h1.3v6.0h-1.3zM105.5 153.6h1.3v7.2h-1.3zM106.7 154.8h1.3v9.6h-1.3zM107.9 157.2h1.3v4.8h-1.3zM109.1 152.4h1.3v12.0h-1.3zM110.3 154.8h1.3v7.2h-1.3zM111.5 156.0h1.3v7.2h-1.3zM112.7 153.6h1.3v10.8h-1.3zM113.9 154.8h1.3v9.6h-1.3zM115.1 153.6h1.3v8.4h-1.3zM116.3 153.6h1.3v7.2h-1.3zM117.5 154.8h1.3v7.2h-1.3zM118.7 156.0h1.3v6.0h-1.3zM119.9 154.8h1.3v6.0h-1.3zM121.1 157.2h1.3v6.0h-1.3zM122.3 154.8h1.3v7.2h-1.3zM123.5 154.8h1.3v9.6h-1.3zM124.7 153.6h1.3v8.4h-1.3zM125.9 152.4h1.3v8.4h-1.3zM127.1 153.6h1.3v7.2h-1.3zM128.3 156.0h1.3v6.0h-1.3zM129.5 154.8h1.3v7.2h-1.3zM130.7 154.8h1.3v7.2h-1.3zM131.9 156.0h1.3v7.2h-1.3zM133.1 154.8h1.3v8.4h-1.3zM134.3 153.6h1.3v7.2h-1.3zM135.5 153.6h1.3v20.4h-1.3zM136.7 154.8h1.3v8.4h-1.3zM137.9 157.2h1.3v7.2h-1.3zM139.1 156.0h1.3v14.4h-1.3zM140.3 154.8h1.3v7.2h-1.3zM141.5 154.8h1.3v6.0h-1.3zM142.7 153.6h1.3v8.4h-1.3zM143.9 154.8h1.3v8.4h-1.3zM145.1 154.8h1.3v6.0h-1.3zM146.3 152.4h1.3v8.4h-1.3zM147.5 154.8h1.3v7.2h-1.3zM148.7 156.0h1.3v8.4h-1.3zM149.9 153.6h1.3v7.2h-1.3zM151.1 154.8h1.3v6.0h-1.3zM152.3 154.8h1.3v7.2h-1.3zM153.5 157.2h1.3v6.0h-1.3zM154.7 156.0h1.3v4.8h-1.3zM155.9 156.0h1.3v4.8h-1.3zM157.1 152.4h1.3v10.8h-1.3zM158.3 154.8h1.3v7.2h-1.3zM159.5 152.4h1.3v8.4h-1.3zM160.7 156.0h1.3v4.8h-1.3zM161.9 154.8h1.3v6.0h-1.3zM163.1 154.8h1.3v7.2h-1.3zM164.3 153.6h1.3v7.2h-1.3zM165.5 153.6h1.3v9.6h-1.3zM166.7 156.0h1.3v6.0h-1.3zM167.9 152.4h1.3v8.4h-1.3zM169.1 154.8h1.3v7.2h-1.3zM170.3 153.6h1.3v9.6h-1.3zM171.5 153.6h1.3v8.4h-1.3zM172.7 152.4h1.3v10.8h-1.3zM173.9 156.0h1.3v4.8h-1.3zM175.1 156.0h1.3v6.0h-1.3zM176.3 154.8h1.3v9.6h-1.3zM177.5 152.4h1.3v19.2h-1.3zM178.7 153.6h1.3v7.2h-1.3zM179.9 153.6h1.3v7.2h-1.3zM181.1 154.8h1.3v7.2h-1.3zM182.3 154.8h1.3v7.2h-1.3zM183.5 156.0h1.3v12.0h-1.3zM184.7 154.8h1.3v8.4h-1.3zM185.9 156.0h1.3v4.8h-1.3zM187.1 156.0h1.3v7.2h-1.3zM188.3 152.4h1.3v9.6h-1.3zM189.5 156.0h1.3v4.8h-1.3zM190.7 154.8h1.3v6.0h-1.3zM191.9 154.8h1.3v6.0h-1.3zM193.1 154.8h1.3v9.6h-1.3zM194.3 157.2h1.3v6.0h-1.3zM195.5 154.8h1.3v6.0h-1.3zM196.7 154.8h1.3v7.2h-1.3zM197.9 153.6h1.3v10.8h-1.3zM199.1 154.8h1.3v8.4h-1.3zM200.3 153.6h1.3v8.4h-1.3zM201.5 157.2h1.3v6.0h-1.3zM202.7 154.8h1.3v7.2h-1.3zM203.9 154.8h1.3v7.2h-1.3zM205.1 157.2h1.3v4.8h-1.3zM206.3 154.8h1.3v7.2h-1.3zM207.5 154.8h1.3v7.2h-1.3zM208.7 154.8h1.3v7.2h-1.3zM209.9 156.0h1.3v6.0h-1.3zM211.1 154.8h1.3v6.0h-1.3zM212.3 153.6h1.3v9.6h-1.3zM213.5 154.8h1.3v6.0h-1.3zM214.7 153.6h1.3v8.4h-1.3zM215.9 153.6h1.3v15.6h-1.3zM217.1 154.8h1.3v8.4h-1.3zM218.3 154.8h1.3v7.2h-1.3zM219.5 154.8h1.3v7.2h-1.3zM220.7 157.2h1.3v6.0h-1.3zM221.9 154.8h1.3v7.2h-1.3zM223.1 156.0h1.3v7.2h-1.3zM224.3 154.8h1.3v6.0h-1.3zM225.5 152.4h1.3v9.6h-1.3zM226.7 156.0h1.3v4.8h-1.3zM227.9 157.2h1.3v4.8h-1.3zM229.1 156.0h1.3v6.0h-1.3zM230.3 154.8h1.3v13.2h-1.3zM231.5 152.4h1.3v8.4h-1.3zM232.7 154.8h1.3v8.4h-1.3zM233.9 154.8h1.3v6.0h-1.3zM235.1 154.8h1.3v7.2h-1.3zM236.3 153.6h1.3v7.2h-1.3zM237.5 157.2h1.3v3.6h-1.3zM238.7 154.8h1.3v6.0h-1.3zM239.9 157.2h1.3v6.0h-1.3zM241.1 157.2h1.3v4.8h-1.3zM242.3 153.6h1.3v8.4h-1.3zM243.5 154.8h1.3v8.4h-1.3zM244.7 154.8h1.3v6.0h-1.3zM245.9 152.4h1.3v10.8h-1.3zM247.1 156.0h1.3v4.8h-1.3zM248.3 153.6h1.3v8.4h-1.3zM249.5 154.8h1.3v7.2h-1.3zM250.7 156.0h1.3v7.2h-1.3zM251.9 156.0h1.3v8.4h-1.3zM253.1 153.6h1.3v8.4h-1.3zM254.3 154.8h1.3v6.0h-1.3zM255.5 154.8h1.3v19.2h-1.3zM256.7 153.6h1.3v9.6h-1.3zM257.9 154.8h1.3v7.2h-1.3zM259.1 157.2h1.3v3.6h-1.3zM260.3 154.8h1.3v8.4h-1.3zM261.5 156.0h1.3v7.2h-1.3zM262.7 154.8h1.3v8.4h-1.3zM263.9 154.8h1.3v7.2h-1.3zM265.1 153.6h1.3v7.2h-1.3zM266.3 154.8h1.3v7.2h-1.3zM267.5 154.8h1.3v6.0h-1.3zM268.7 154.8h1.3v8.4h-1.3zM269.9 154.8h1.3v7.2h-1.3zM271.1 152.4h1.3v9.6h-1.3zM272.3 156.0h1.3v4.8h-1.3zM273.5 152.4h1.3v10.8h-1.3zM274.7 154.8h1.3v8.4h-1.3zM275.9 154.8h1.3v7.2h-1.3zM277.1 154.8h1.3v6.0h-1.3zM278.3 154.8h1.3v6.0h-1.3zM279.5 154.8h1.3v16.8h-1.3zM280.7 153.6h1.3v9.6h-1.3zM281.9 154.8h1.3v6.0h-1.3zM283.1 154.8h1.3v6.0h-1.3zM284.3 156.0h1.3v7.2h-1.3zM285.5 157.2h1.3v6.0h-1.3zM286.7 154.8h1.3v9.6h-1.3zM287.9 153.6h1.3v8.4h-1.3zM289.1 154.8h1.3v8.4h-1.3zM290.3 156.0h1.3v6.0h-1.3zM291.5 156.0h1.3v18.0h-1.3zM292.7 156.0h1.3v7.2h-1.3zM293.9 156.0h1.3v6.0h-1.3zM295.1 154.8h1.3v7.2h-1.3zM296.3 156.0h1.3v6.0h-1.3zM297.5 154.8h1.3v6.0h-1.3zM298.7 156.0h1.3v7.2h-1.3zM299.9 154.8h1.3v9.6h-1.3zM301.1 154.8h1.3v7.2h-1.3zM302.3 154.8h1.3v8.4h-1.3zM303.5 153.6h1.3v9.6h-1.3zM304.7 152.4h1.3v12.0h-1.3zM305.9 154.8h1.3v6.0h-1.3zM307.1 156.0h1.3v4.8h-1.3zM308.3 156.0h1.3v6.0h-1.3zM309.5 156.0h1.3v8.4h-1.3zM310.7 153.6h1.3v9.6h-1.3zM311.9 153.6h1.3v7.2h-1.3zM313.1 153.6h1.3v9.6h-1.3zM314.3 154.8h1.3v7.2h-1.3zM315.5 154.8h1.3v7.2h-1.3zM316.7 154.8h1.3v8.4h-1.3zM317.9 154.8h1.3v6.0h-1.3zM319.1 154.8h1.3v7.2h-1.3zM320.3 154.8h1.3v8.4h-1.3zM321.5 154.8h1.3v6.0h-1.3zM322.7 154.8h1.3v7.2h-1.3zM323.9 156.0h1.3v4.8h-1.3zM325.1 154.8h1.3v19.2h-1.3zM326.3 152.4h1.3v21.6h-1.3zM327.5 154.8h1.3v6.0h-1.3zM328.7 154.8h1.3v6.0h-1.3zM329.9 157.2h1.3v4.8h-1.3zM331.1 154.8h1.3v7.2h-1.3zM332.3 154.8h1.3v9.6h-1.3zM333.5 154.8h1.3v6.0h-1.3zM334.7 154.8h1.3v9.6h-1.3zM335.9 153.6h1.3v9.6h-1.3zM337.1 156.0h1.3v6.0h-1.3zM338.3 154.8h1.3v8.4h-1.3zM339.5 154.8h1.3v6.0h-1.3zM340.7 154.8h1.3v7.2h-1.3zM341.9 156.0h1.3v8.4h-1.3zM343.1 153.6h1.3v9.6h-1.3zM344.3 154.8h1.3v8.4h-1.3zM345.5 157.2h1.3v4.8h-1.3zM346.7 156.0h1.3v6.0h-1.3zM347.9 156.0h1.3v8.4h-1.3zM349.1 156.0h1.3v4.8h-1.3zM350.3 154.8h1.3v7.2h-1.3zM351.5 153.6h1.3v8.4h-1.3zM352.7 156.0h1.3v6.0h-1.3zM353.9 154.8h1.3v7.2h-1.3zM355.1 154.8h1.3v6.0h-1.3zM356.3 153.6h1.3v8.4h-1.3zM357.5 153.6h1.3v7.2h-1.3zM358.7 154.8h1.3v7.2h-1.3zM359.9 153.6h1.3v8.4h-1.3zM361.1 154.8h1.3v8.4h-1.3zM362.3 153.6h1.3v8.4h-1.3zM363.5 154.8h1.3v16.8h-1.3zM364.7 153.6h1.3v8.4h-1.3zM365.9 156.0h1.3v6.0h-1.3zM367.1 154.8h1.3v6.0h-1.3zM368.3 156.0h1.3v6.0h-1.3zM369.5 156.0h1.3v6.0h-1.3zM370.7 153.6h1.3v9.6h-1.3zM371.9 153.6h1.3v7.2h-1.3zM373.1 152.4h1.3v10.8h-1.3zM374.3 156.0h1.3v7.2h-1.3zM375.5 156.0h1.3v7.2h-1.3zM376.7 153.6h1.3v8.4h-1.3zM377.9 153.6h1.3v7.2h-1.3zM379.1 154.8h1.3v6.0h-1.3zM380.3 153.6h1.3v8.4h-1.3zM381.5 157.2h1.3v3.6h-1.3zM382.7 156.0h1.3v4.8h-1.3zM383.9 153.6h1.3v9.6h-1.3zM385.1 153.6h1.3v7.2h-1.3zM386.3 154.8h1.3v7.2h-1.3zM387.5 154.8h1.3v7.2h-1.3zM388.7 156.0h1.3v6.0h-1.3zM389.9 154.8h1.3v7.2h-1.3zM391.1 156.0h1.3v6.0h-1.3zM392.3 152.4h1.3v8.4h-1.3zM393.5 154.8h1.3v6.0h-1.3zM394.7 154.8h1.3v8.4h-1.3zM395.9 154.8h1.3v7.2h-1.3zM397.1 154.8h1.3v7.2h-1.3zM398.3 156.0h1.3v4.8h-1.3zM399.5 153.6h1.3v9.6h-1.3zM400.7 152.4h1.3v21.6h-1.3zM401.9 153.6h1.3v8.4h-1.3zM403.1 156.0h1.3v8.4h-1.3zM404.3 154.8h1.3v8.4h-1.3zM405.5 156.0h1.3v6.0h-1.3zM406.7 154.8h1.3v7.2h-1.3zM407.9 153.6h1.3v7.2h-1.3zM409.1 154.8h1.3v6.0h-1.3zM410.3 154.8h1.3v8.4h-1.3zM411.5 154.8h1.3v7.2h-1.3zM412.7 153.6h1.3v8.4h-1.3zM413.9 154.8h1.3v6.0h-1.3zM415.1 153.6h1.3v8.4h-1.3zM416.3 154.8h1.3v8.4h-1.3zM417.5 153.6h1.3v7.2h-1.3zM418.7 154.8h1.3v9.6h-1.3zM419.9 152.4h1.3v9.6h-1.3zM421.1 154.8h1.3v7.2h-1.3zM422.3 154.8h1.3v7.2h-1.3zM423.5 157.2h1.3v4.8h-1.3zM424.7 156.0h1.3v4.8h-1.3zM425.9 156.0h1.3v4.8h-1.3zM427.1 154.8h1.3v8.4h-1.3zM428.3 154.8h1.3v7.2h-1.3zM429.5 153.6h1.3v8.4h-1.3zM430.7 156.0h1.3v4.8h-1.3zM431.9 153.6h1.3v15.6h-1.3zM433.1 153.6h1.3v8.4h-1.3zM434.3 154.8h1.3v8.4h-1.3zM435.5 154.8h1.3v8.4h-1.3zM436.7 152.4h1.3v9.6h-1.3zM437.9 157.2h1.3v4.8h-1.3zM439.1 152.4h1.3v8.4h-1.3zM440.3 154.8h1.3v7.2h-1.3zM441.5 154.8h1.3v7.2h-1.3zM442.7 156.0h1.3v7.2h-1.3zM443.9 156.0h1.3v6.0h-1.3zM445.1 156.0h1.3v8.4h-1.3zM446.3 153.6h1.3v9.6h-1.3zM447.5 157.2h1.3v3.6h-1.3zM448.7 156.0h1.3v8.4h-1.3zM449.9 157.2h1.3v3.6h-1.3zM451.1 154.8h1.3v6.0h-1.3zM452.3 154.8h1.3v8.4h-1.3zM453.5 153.6h1.3v9.6h-1.3zM454.7 156.0h1.3v8.4h-1.3zM455.9 156.0h1.3v4.8h-1.3zM457.1 154.8h1.3v8.4h-1.3zM458.3 154.8h1.3v7.2h-1.3zM459.5 156.0h1.3v6.0h-1.3zM460.7 156.0h1.3v6.0h-1.3zM461.9 154.8h1.3v8.4h-1.3zM463.1 154.8h1.3v8.4h-1.3zM464.3 157.2h1.3v4.8h-1.3zM465.5 156.0h1.3v6.0h-1.3zM466.7 157.2h1.3v4.8h-1.3zM467.9 152.4h1.3v8.4h-1.3zM469.1 154.8h1.3v9.6h-1.3zM470.3 152.4h1.3v8.4h-1.3zM471.5 154.8h1.3v7.2h-1.3zM472.7 152.4h1.3v9.6h-1.3zM473.9 154.8h1.3v6.0h-1.3zM475.1 156.0h1.3v6.0h-1.3zM476.3 153.6h1.3v8.4h-1.3zM477.5 154.8h1.3v8.4h-1.3zM478.7 154.8h1.3v7.2h-1.3zM479.9 152.4h1.3v10.8h-1.3zM481.1 153.6h1.3v9.6h-1.3zM482.3 153.6h1.3v8.4h-1.3zM483.5 156.0h1.3v4.8h-1.3zM484.7 152.4h1.3v12.0h-1.3zM485.9 154.8h1.3v8.4h-1.3zM487.1 153.6h1.3v8.4h-1.3zM488.3 152.4h1.3v9.6h-1.3zM489.5 156.0h1.3v4.8h-1.3zM490.7 153.6h1.3v8.4h-1.3zM491.9 154.8h1.3v6.0h-1.3zM493.1 157.2h1.3v4.8h-1.3zM494.3 154.8h1.3v9.6h-1.3zM495.5 154.8h1.3v9.6h-1.3zM496.7 157.2h1.3v4.8h-1.3zM497.9 154.8h1.3v8.4h-1.3zM499.1 153.6h1.3v8.4h-1.3zM500.3 153.6h1.3v8.4h-1.3zM501.5 154.8h1.3v14.4h-1.3zM502.7 156.0h1.3v6.0h-1.3zM503.9 156.0h1.3v8.4h-1.3zM505.1 154.8h1.3v7.2h-1.3zM506.3 154.8h1.3v9.6h-1.3zM507.5 157.2h1.3v7.2h-1.3zM508.7 156.0h1.3v6.0h-1.3zM509.9 157.2h1.3v4.8h-1.3zM511.1 154.8h1.3v7.2h-1.3zM512.3 154.8h1.3v8.4h-1.3zM513.5 157.2h1.3v4.8h-1.3zM514.7 157.2h1.3v3.6h-1.3zM515.9 157.2h1.3v3.6h-1.3zM517.1 152.4h1.3v9.6h-1.3zM518.3 154.8h1.3v7.2h-1.3zM519.5 152.4h1.3v12.0h-1.3zM520.7 152.4h1.3v8.4h-1.3zM521.9 154.8h1.3v8.4h-1.3zM523.1 154.8h1.3v6.0h-1.3zM524.3 153.6h1.3v7.2h-1.3zM525.5 156.0h1.3v6.0h-1.3zM526.7 157.2h1.3v4.8h-1.3zM527.9 154.8h1.3v8.4h-1.3zM529.1 154.8h1.3v7.2h-1.3zM530.3 154.8h1.3v7.2h-1.3zM531.5 154.8h1.3v6.0h-1.3zM532.7 153.6h1.3v7.2h-1.3zM533.9 154.8h1.3v9.6h-1.3zM535.1 154.8h1.3v8.4h-1.3zM536.3 154.8h1.3v7.2h-1.3zM537.5 154.8h1.3v6.0h-1.3zM538.7 154.8h1.3v6.0h-1.3zM539.9 157.2h1.3v7.2h-1.3zM541.1 154.8h1.3v7.2h-1.3zM542.3 156.0h1.3v4.8h-1.3zM543.5 154.8h1.3v7.2h-1.3zM544.7 156.0h1.3v4.8h-1.3zM545.9 154.8h1.3v7.2h-1.3zM547.1 153.6h1.3v9.6h-1.3zM548.3 153.6h1.3v8.4h-1.3zM549.5 156.0h1.3v8.4h-1.3zM550.7 154.8h1.3v8.4h-1.3zM551.9 154.8h1.3v6.0h-1.3zM553.1 153.6h1.3v8.4h-1.3zM554.3 154.8h1.3v9.6h-1.3zM555.5 153.6h1.3v8.4h-1.3zM556.7 154.8h1.3v7.2h-1.3zM557.9 154.8h1.3v6.0h-1.3zM559.1 154.8h1.3v7.2h-1.3zM560.3 157.2h1.3v4.8h-1.3zM561.5 154.8h1.3v14.4h-1.3zM562.7 154.8h1.3v8.4h-1.3zM563.9 156.0h1.3v8.4h-1.3zM565.1 157.2h1.3v4.8h-1.3zM566.3 154.8h1.3v8.4h-1.3zM567.5 154.8h1.3v8.4h-1.3zM568.7 154.8h1.3v7.2h-1.3zM569.9 154.8h1.3v8.4h-1.3zM571.1 154.8h1.3v6.0h-1.3zM572.3 154.8h1.3v7.2h-1.3zM573.5 152.4h1.3v9.6h-1.3zM574.7 157.2h1.3v4.8h-1.3zM575.9 156.0h1.3v6.0h-1.3zM577.1 154.8h1.3v9.6h-1.3zM578.3 154.8h1.3v7.2h-1.3zM579.5 156.0h1.3v4.8h-1.3zM580.7 156.0h1.3v8.4h-1.3zM581.9 153.6h1.3v7.2h-1.3zM583.1 153.6h1.3v9.6h-1.3zM584.3 154.8h1.3v6.0h-1.3zM585.5 154.8h1.3v8.4h-1.3zM586.7 152.4h1.3v10.8h-1.3zM587.9 153.6h1.3v10.8h-1.3zM589.1 154.8h1.3v6.0h-1.3zM590.3 157.2h1.3v4.8h-1.3zM591.5 153.6h1.3v10.8h-1.3zM592.7 156.0h1.3v16.8h-1.3zM593.9 156.0h1.3v4.8h-1.3zM595.1 154.8h1.3v6.0h-1.3zM596.3 154.8h1.3v6.0h-1.3zM597.5 154.8h1.3v6.0h-1.3zM598.7 152.4h1.3v8.4h-1.3zM599.9 153.6h1.3v8.4h-1.3zM601.1 154.8h1.3v7.2h-1.3zM602.3 154.8h1.3v8.4h-1.3zM603.5 154.8h1.3v8.4h-1.3zM604.7 154.8h1.3v7.2h-1.3zM605.9 154.8h1.3v7.2h-1.3zM607.1 157.2h1.3v3.6h-1.3zM608.3 154.8h1.3v8.4h-1.3zM609.5 156.0h1.3v4.8h-1.3zM610.7 156.0h1.3v4.8h-1.3zM611.9 154.8h1.3v7.2h-1.3zM613.1 152.4h1.3v9.6h-1.3zM614.3 153.6h1.3v9.6h-1.3zM615.5 156.0h1.3v4.8h-1.3zM616.7 156.0h1.3v6.0h-1.3zM617.9 152.4h1.3v8.4h-1.3zM619.1 154.8h1.3v7.2h-1.3zM620.3 153.6h1.3v8.4h-1.3zM621.5 153.6h1.3v8.4h-1.3zM622.7 157.2h1.3v3.6h-1.3zM623.9 154.8h1.3v7.2h-1.3zM625.1 154.8h1.3v7.2h-1.3zM626.3 156.0h1.3v6.0h-1.3zM627.5 154.8h1.3v6.0h-1.3zM628.7 154.8h1.3v7.2h-1.3zM629.9 153.6h1.3v8.4h-1.3zM631.1 157.2h1.3v3.6h-1.3zM632.3 153.6h1.3v7.2h-1.3zM633.5 154.8h1.3v6.0h-1.3zM634.7 156.0h1.3v7.2h-1.3zM635.9 152.4h1.3v9.6h-1.3zM637.1 153.6h1.3v8.4h-1.3zM638.3 153.6h1.3v8.4h-1.3zM639.5 154.8h1.3v9.6h-1.3zM640.7 154.8h1.3v9.6h-1.3zM641.9 154.8h1.3v9.6h-1.3zM643.1 156.0h1.3v6.0h-1.3zM644.3 154.8h1.3v6.0h-1.3zM645.5 154.8h1.3v7.2h-1.3zM646.7 153.6h1.3v8.4h-1.3zM647.9 157.2h1.3v6.0h-1.3zM649.1 156.0h1.3v7.2h-1.3zM650.3 154.8h1.3v16.8h-1.3zM651.5 154.8h1.3v7.2h-1.3zM652.7 157.2h1.3v6.0h-1.3zM653.9 153.6h1.3v9.6h-1.3zM655.1 154.8h1.3v7.2h-1.3zM656.3 152.4h1.3v9.6h-1.3zM657.5 153.6h1.3v8.4h-1.3zM658.7 156.0h1.3v7.2h-1.3zM659.9 154.8h1.3v6.0h-1.3zM661.1 157.2h1.3v4.8h-1.3zM662.3 152.4h1.3v10.8h-1.3zM663.5 154.8h1.3v8.4h-1.3zM664.7 154.8h1.3v7.2h-1.3zM665.9 156.0h1.3v4.8h-1.3zM667.1 154.8h1.3v6.0h-1.3zM668.3 154.8h1.3v6.0h-1.3zM669.5 154.8h1.3v8.4h-1.3zM670.7 153.6h1.3v10.8h-1.3zM671.9 154.8h1.3v8.4h-1.3zM673.1 156.0h1.3v4.8h-1.3zM674.3 153.6h1.3v10.8h-1.3zM675.5 153.6h1.3v7.2h-1.3zM676.7 154.8h1.3v6.0h-1.3zM677.9 153.6h1.3v14.4h-1.3zM679.1 154.8h1.3v13.2h-1.3zM680.3 156.0h1.3v12.0h-1.3zM681.5 153.6h1.3v9.6h-1.3zM682.7 154.8h1.3v6.0h-1.3zM683.9 156.0h1.3v7.2h-1.3zM685.1 156.0h1.3v6.0h-1.3zM686.3 152.4h1.3v9.6h-1.3zM687.5 154.8h1.3v7.2h-1.3zM688.7 157.2h1.3v3.6h-1.3zM689.9 154.8h1.3v7.2h-1.3zM691.1 152.4h1.3v10.8h-1.3zM692.3 154.8h1.3v8.4h-1.3zM693.5 154.8h1.3v6.0h-1.3zM694.7 154.8h1.3v7.2h-1.3zM695.9 154.8h1.3v7.2h-1.3zM697.1 153.6h1.3v9.6h-1.3zM698.3 154.8h1.3v8.4h-1.3zM699.5 157.2h1.3v3.6h-1.3zM700.7 154.8h1.3v6.0h-1.3zM701.9 157.2h1.3v3.6h-1.3zM703.1 153.6h1.3v8.4h-1.3zM704.3 157.2h1.3v6.0h-1.3zM705.5 153.6h1.3v9.6h-1.3zM706.7 152.4h1.3v9.6h-1.3zM707.9 154.8h1.3v7.2h-1.3zM709.1 154.8h1.3v19.2h-1.3zM710.3 153.6h1.3v9.6h-1.3zM711.5 152.4h1.3v9.6h-1.3zM712.7 156.0h1.3v4.8h-1.3zM713.9 154.8h1.3v7.2h-1.3zM715.1 156.0h1.3v6.0h-1.3zM716.3 154.8h1.3v7.2h-1.3zM717.5 156.0h1.3v4.8h-1.3zM718.7 154.8h1.3v7.2h-1.3zM719.9 154.8h1.3v7.2h-1.3zM721.1 153.6h1.3v8.4h-1.3zM722.3 154.8h1.3v19.2h-1.3zM723.5 156.0h1.3v7.2h-1.3zM724.7 157.2h1.3v4.8h-1.3zM725.9 154.8h1.3v7.2h-1.3zM727.1 153.6h1.3v7.2h-1.3zM728.3 153.6h1.3v10.8h-1.3zM729.5 153.6h1.3v7.2h-1.3zM730.7 157.2h1.3v3.6h-1.3zM731.9 153.6h1.3v8.4h-1.3zM733.1 154.8h1.3v6.0h-1.3zM734.3 154.8h1.3v9.6h-1.3zM735.5 153.6h1.3v7.2h-1.3zM736.7 154.8h1.3v6.0h-1.3zM737.9 153.6h1.3v7.2h-1.3zM739.1 154.8h1.3v7.2h-1.3zM740.3 153.6h1.3v8.4h-1.3zM741.5 154.8h1.3v14.4h-1.3zM742.7 153.6h1.3v8.4h-1.3zM743.9 153.6h1.3v8.4h-1.3zM745.1 154.8h1.3v7.2h-1.3zM746.3 154.8h1.3v9.6h-1.3zM747.5 152.4h1.3v9.6h-1.3zM748.7 156.0h1.3v6.0h-1.3zM749.9 154.8h1.3v19.2h-1.3zM751.1 156.0h1.3v4.8h-1.3zM752.3 154.8h1.3v7.2h-1.3zM753.5 154.8h1.3v7.2h-1.3zM754.7 154.8h1.3v8.4h-1.3zM755.9 153.6h1.3v9.6h-1.3zM757.1 154.8h1.3v7.2h-1.3zM758.3 156.0h1.3v6.0h-1.3zM759.5 154.8h1.3v6.0h-1.3zM760.7 156.0h1.3v4.8h-1.3zM761.9 154.8h1.3v8.4h-1.3zM763.1 154.8h1.3v8.4h-1.3zM764.3 154.8h1.3v7.2h-1.3zM765.5 156.0h1.3v7.2h-1.3zM766.7 156.0h1.3v4.8h-1.3zM767.9 156.0h1.3v6.0h-1.3zM769.1 156.0h1.3v6.0h-1.3zM770.3 156.0h1.3v4.8h-1.3zM771.5 157.2h1.3v4.8h-1.3zM772.7 153.6h1.3v7.2h-1.3zM773.9 154.8h1.3v8.4h-1.3zM775.1 156.0h1.3v6.0h-1.3zM776.3 154.8h1.3v7.2h-1.3zM777.5 153.6h1.3v8.4h-1.3zM778.7 154.8h1.3v8.4h-1.3zM779.9 153.6h1.3v9.6h-1.3zM781.1 153.6h1.3v8.4h-1.3zM782.3 156.0h1.3v7.2h-1.3zM783.5 156.0h1.3v7.2h-1.3zM784.7 153.6h1.3v9.6h-1.3zM785.9 154.8h1.3v6.0h-1.3zM787.1 154.8h1.3v9.6h-1.3zM788.3 153.6h1.3v7.2h-1.3zM789.5 152.4h1.3v9.6h-1.3zM790.7 157.2h1.3v4.8h-1.3zM791.9 154.8h1.3v9.6h-1.3zM793.1 154.8h1.3v6.0h-1.3zM794.3 153.6h1.3v10.8h-1.3zM795.5 156.0h1.3v4.8h-1.3zM796.7 154.8h1.3v6.0h-1.3zM797.9 154.8h1.3v6.0h-1.3zM799.1 157.2h1.3v3.6h-1.3zM800.3 154.8h1.3v7.2h-1.3zM801.5 156.0h1.3v8.4h-1.3zM802.7 157.2h1.3v3.6h-1.3zM803.9 153.6h1.3v8.4h-1.3zM805.1 154.8h1.3v8.4h-1.3zM806.3 152.4h1.3v8.4h-1.3zM807.5 156.0h1.3v6.0h-1.3zM808.7 153.6h1.3v10.8h-1.3zM809.9 154.8h1.3v6.0h-1.3zM811.1 154.8h1.3v8.4h-1.3zM812.3 153.6h1.3v8.4h-1.3zM813.5 154.8h1.3v9.6h-1.3zM814.7 154.8h1.3v6.0h-1.3zM815.9 157.2h1.3v3.6h-1.3zM817.1 157.2h1.3v3.6h-1.3zM818.3 154.8h1.3v8.4h-1.3zM819.5 156.0h1.3v4.8h-1.3zM820.7 154.8h1.3v7.2h-1.3zM821.9 154.8h1.3v9.6h-1.3zM823.1 156.0h1.3v6.0h-1.3zM824.3 154.8h1.3v8.4h-1.3zM825.5 154.8h1.3v7.2h-1.3zM826.7 154.8h1.3v6.0h-1.3zM827.9 156.0h1.3v4.8h-1.3zM829.1 156.0h1.3v16.8h-1.3zM830.3 156.0h1.3v7.2h-1.3zM831.5 154.8h1.3v7.2h-1.3zM832.7 152.4h1.3v9.6h-1.3zM833.9 152.4h1.3v9.6h-1.3zM835.1 156.0h1.3v6.0h-1.3zM836.3 154.8h1.3v9.6h-1.3zM837.5 154.8h1.3v7.2h-1.3zM838.7 156.0h1.3v4.8h-1.3zM839.9 154.8h1.3v6.0h-1.3zM841.1 154.8h1.3v7.2h-1.3zM842.3 156.0h1.3v6.0h-1.3zM843.5 152.4h1.3v10.8h-1.3zM844.7 153.6h1.3v9.6h-1.3zM845.9 154.8h1.3v8.4h-1.3zM847.1 154.8h1.3v7.2h-1.3zM848.3 154.8h1.3v6.0h-1.3zM849.5 157.2h1.3v4.8h-1.3zM850.7 156.0h1.3v6.0h-1.3zM851.9 156.0h1.3v4.8h-1.3zM853.1 154.8h1.3v7.2h-1.3zM854.3 156.0h1.3v4.8h-1.3zM855.5 153.6h1.3v7.2h-1.3zM856.7 156.0h1.3v4.8h-1.3zM857.9 153.6h1.3v9.6h-1.3zM859.1 156.0h1.3v7.2h-1.3zM860.3 152.4h1.3v9.6h-1.3zM861.5 154.8h1.3v18.0h-1.3zM862.7 152.4h1.3v9.6h-1.3zM863.9 153.6h1.3v7.2h-1.3zM865.1 154.8h1.3v8.4h-1.3zM866.3 156.0h1.3v6.0h-1.3zM867.5 153.6h1.3v8.4h-1.3zM868.7 156.0h1.3v6.0h-1.3zM869.9 152.4h1.3v9.6h-1.3zM871.1 152.4h1.3v10.8h-1.3zM872.3 154.8h1.3v7.2h-1.3zM873.5 154.8h1.3v8.4h-1.3zM874.7 153.6h1.3v9.6h-1.3zM875.9 154.8h1.3v7.2h-1.3zM877.1 154.8h1.3v6.0h-1.3zM878.3 154.8h1.3v7.2h-1.3zM879.5 154.8h1.3v8.4h-1.3zM880.7 152.4h1.3v8.4h-1.3zM881.9 157.2h1.3v6.0h-1.3zM883.1 154.8h1.3v8.4h-1.3zM884.3 157.2h1.3v4.8h-1.3zM885.5 154.8h1.3v6.0h-1.3zM886.7 157.2h1.3v3.6h-1.3zM887.9 154.8h1.3v7.2h-1.3zM889.1 154.8h1.3v7.2h-1.3zM890.3 153.6h1.3v8.4h-1.3zM891.5 154.8h1.3v7.2h-1.3zM892.7 153.6h1.3v7.2h-1.3zM893.9 154.8h1.3v7.2h-1.3zM895.1 153.6h1.3v8.4h-1.3zM896.3 154.8h1.3v6.0h-1.3zM897.5 154.8h1.3v8.4h-1.3zM898.7 157.2h1.3v4.8h-1.3zM899.9 154.8h1.3v7.2h-1.3zM901.1 157.2h1.3v6.0h-1.3zM902.3 153.6h1.3v10.8h-1.3zM903.5 156.0h1.3v6.0h-1.3zM904.7 154.8h1.3v6.0h-1.3zM905.9 157.2h1.3v4.8h-1.3zM907.1 154.8h1.3v6.0h-1.3zM908.3 157.2h1.3v3.6h-1.3zM909.5 154.8h1.3v6.0h-1.3zM910.7 154.8h1.3v8.4h-1.3zM911.9 153.6h1.3v9.6h-1.3zM913.1 152.4h1.3v8.4h-1.3zM914.3 156.0h1.3v8.4h-1.3zM915.5 154.8h1.3v8.4h-1.3zM916.7 154.8h1.3v7.2h-1.3zM917.9 156.0h1.3v4.8h-1.3zM919.1 153.6h1.3v8.4h-1.3zM920.3 154.8h1.3v7.2h-1.3zM921.5 153.6h1.3v8.4h-1.3zM922.7 156.0h1.3v4.8h-1.3zM923.9 153.6h1.3v7.2h-1.3zM925.1 152.4h1.3v12.0h-1.3zM926.3 154.8h1.3v9.6h-1.3zM927.5 154.8h1.3v6.0h-1.3zM928.7 154.8h1.3v6.0h-1.3zM929.9 153.6h1.3v7.2h-1.3zM931.1 156.0h1.3v6.0h-1.3zM932.3 154.8h1.3v8.4h-1.3z"/>
<rect x="26.3" y="157.2" width="907.4" height="3.6" fill="#e8e820"/>
<rect x="25.15" y="23.75" width="909.7" height="598.7" fill="none" stroke="#f4f4f4" stroke-width="2.3"/>
<path d="M175.4 25.2H189.9V37.6L182.6 41.4L175.4 37.6Z" fill="#000" stroke="#9428ec" stroke-width="1.6" stroke-linejoin="round"/>
<path d="M178.2 29.7H187M182.6 29.7V36.9" fill="none" stroke="#cc80ff" stroke-width="1.8"/>
<path d="M0 313.8H17.2L23.8 323.6L17.2 334.2H0Z" fill="#000" stroke="#e8f020" stroke-width="1.6" stroke-linejoin="miter"/>
<text class="ar" x="4.2" y="330.3" font-size="15.8" textLength="10.8" lengthAdjust="spacingAndGlyphs" fill="#e8f020">2</text>
<path d="M937 155.6L952 148.2V163Z" fill="#c81ee6"/>
<rect x="0" y="623.2" width="383" height="96.8" fill="#5cb0d4"/>
<rect x="383" y="645.4" width="577" height="74.6" fill="#0560a2"/>
<rect x="383" y="705" width="577" height="12.4" fill="#0464aa"/>
<rect x="383" y="717.4" width="577" height="2.6" fill="#0a76d4"/>
<rect x="382.6" y="645.4" width="4.6" height="74.6" fill="#0a74cc"/>
<rect x="958.2" y="645.4" width="1.8" height="74.6" fill="#0a78d4"/>
<rect x="1.4" y="623.6" width="248.9" height="23.2" rx="4" fill="#000"/>
<rect x="1.4" y="647.8" width="248.9" height="23.1" rx="4" fill="#000"/>
<rect x="1.4" y="673.2" width="378.4" height="43.5" rx="4" fill="#000"/>
<rect x="253.4" y="623.6" width="126.4" height="47.3" rx="4.5" fill="#000"/>
<circle cx="12.2" cy="636" r="9.5" fill="#f00808"/>
<text class="ar" x="12.2" y="641.7" font-size="16" font-weight="bold" fill="#000" text-anchor="middle">1</text>
<circle cx="12.2" cy="660" r="9.5" fill="#ece810"/>
<text class="ar" x="12.2" y="665.7" font-size="16" font-weight="bold" fill="#000" text-anchor="middle">2</text>
<circle cx="12" cy="684" r="9.5" fill="#ece810"/>
<text class="ar" x="12" y="689.7" font-size="16" font-weight="bold" fill="#000" text-anchor="middle">2</text>
<circle cx="12" cy="706.8" r="9.5" fill="#ece810"/>
<text class="ar" x="12" y="712.5" font-size="16" font-weight="bold" fill="#000" text-anchor="middle">2</text>
<circle cx="202.4" cy="684.2" r="9.5" fill="#ece810"/>
<text class="ar" x="202.4" y="689.9" font-size="16" font-weight="bold" fill="#000" text-anchor="middle">2</text>
<circle cx="202.4" cy="707.2" r="9.5" fill="#ece810"/>
<text class="ar" x="202.4" y="712.9" font-size="16" font-weight="bold" fill="#000" text-anchor="middle">2</text>
<text x="21.4" y="643" fill="#c80c0c">5V-</text>
<text x="126.5" y="643" fill="#c80c0c"><tspan class="z">0</tspan>.<tspan class="z">0</tspan><tspan class="z">0</tspan>div</text>
<text x="21.4" y="667.2" fill="#d4d420">2V-</text>
<text x="126.5" y="667.2" fill="#d4d420"><tspan class="z">0</tspan>.<tspan class="z">0</tspan><tspan class="z">0</tspan>div</text>
<text x="26" y="689.8" fill="#dcdc28">F:  ?</text>
<text x="26" y="712.8" fill="#dcdc28">+D:  ?</text>
<text x="217.4" y="689.8" fill="#dcdc28">Vk:5.516v</text>
<text x="217.4" y="712.8" fill="#dcdc28">Ma:5.76<tspan class="z">0</tspan>v</text>
<text x="256.5" y="640.8" fill="#e0e0e0">(12.5KS/s)</text>
<text x="261.9" y="664.8" fill="#e0e0e0">Depth:1<tspan class="z">0</tspan>K</text>
<rect x="383.4" y="623.8" width="118.6" height="21.2" rx="10.6" fill="#000"/>
<text x="405" y="640.8" fill="#e4e4e4">M:4<tspan class="z">0</tspan>ms</text>
<rect x="798" y="623.8" width="154" height="21.4" rx="10.7" fill="#000"/>
<circle cx="810.4" cy="634.2" r="9.5" fill="#ece810"/>
<text class="ar" x="810.4" y="639.9" font-size="16" font-weight="bold" fill="#000" text-anchor="middle">2</text>
<path d="M822 643H832L838.6 627.2H846.4" fill="none" stroke="#e4e4e4" stroke-width="1.6"/>
<text x="848.3" y="641.6" fill="#e4e4e4">5.6<tspan class="z">0</tspan>V</text>
<rect x="389.6" y="651" width="105.2" height="65.8" rx="3" fill="#054a94"/>
<rect x="387" y="648.6" width="104.6" height="65.2" rx="3" fill="#3c9cf4"/>
<rect x="388.6" y="650.2" width="102.8" height="63.4" rx="2" fill="#0282e4"/>
<rect x="720" y="651" width="105.2" height="65.8" rx="3" fill="#054a94"/>
<rect x="717.4" y="648.6" width="104.6" height="65.2" rx="3" fill="#3c9cf4"/>
<rect x="719" y="650.2" width="102.8" height="63.4" rx="2" fill="#0282e4"/>
<text x="415.3" y="674" fill="#0a2470">Type</text>
<rect x="409" y="685.4" width="60.4" height="23.4" fill="#e6e6e6"/>
<text x="409.8" y="703.4" fill="#000">Image</text>
<text x="745" y="688.6" fill="#0a2470">Save</text>
</svg>
</body></html>
